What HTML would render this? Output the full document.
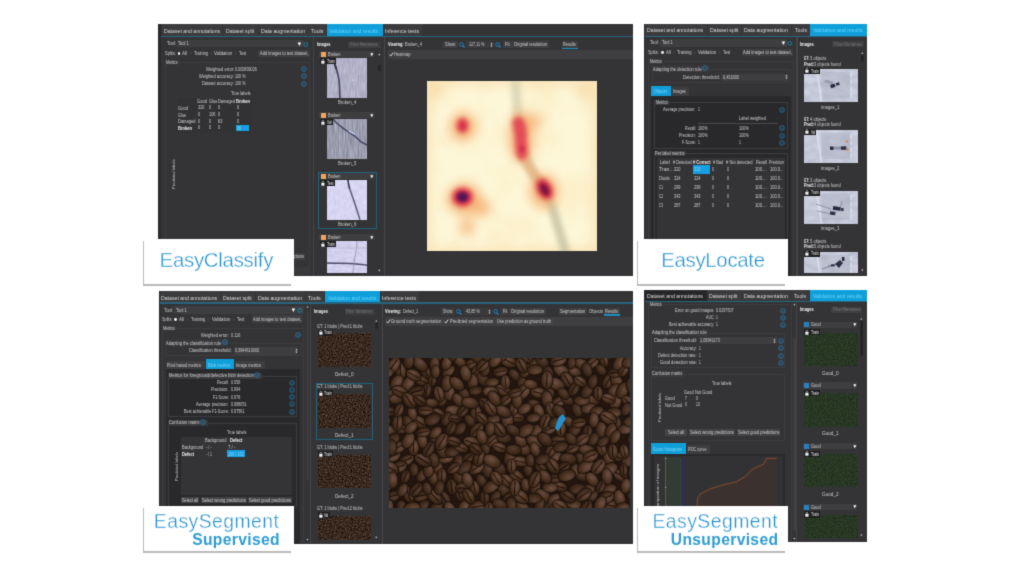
<!DOCTYPE html>
<html><head><meta charset="utf-8"><title>Deep learning tools</title>
<style>
html,body{margin:0;padding:0;}
body{width:1024px;height:576px;background:#fff;position:relative;overflow:hidden;font-family:"Liberation Sans",sans-serif;}
.b{position:absolute;}
.t{position:absolute;white-space:nowrap;line-height:1;transform-origin:0 0;}
svg{position:absolute;overflow:hidden;}
#stage{position:absolute;left:0;top:0;width:1024px;height:576px;background:#fff;filter:url(#soft);}
</style></head><body><svg width="0" height="0" style="position:absolute"><filter id="soft" x="0" y="0" width="100%" height="100%" color-interpolation-filters="sRGB"><feConvolveMatrix order="3" kernelMatrix="0.02 0.10 0.02 0.10 0.52 0.10 0.02 0.10 0.02" edgeMode="duplicate" preserveAlpha="true"/></filter></svg><div id="stage">
<div class="b" style="left:158.20px;top:24.00px;width:475.00px;height:252.40px;background:#343436;"></div>
<div class="b" style="left:158.20px;top:24.00px;width:2.60px;height:252.40px;background:#2a2a2c;"></div>
<div class="b" style="left:161.60px;top:24.00px;width:60.80px;height:12.00px;background:#3b3b3d;"></div>
<div class="t" style="left:163.70px;top:29px;font-size:5.6px;color:#d8d8d8;transform:scaleX(0.926);">Dataset and annotations</div>
<div class="b" style="left:223.40px;top:24.00px;width:34.20px;height:12.00px;background:#3b3b3d;"></div>
<div class="t" style="left:226.10px;top:29px;font-size:5.6px;color:#d8d8d8;transform:scaleX(0.918);">Dataset split</div>
<div class="b" style="left:258.50px;top:24.00px;width:49.20px;height:12.00px;background:#3b3b3d;"></div>
<div class="t" style="left:260.60px;top:29px;font-size:5.6px;color:#d8d8d8;transform:scaleX(0.932);">Data augmentation</div>
<div class="b" style="left:308.60px;top:24.00px;width:17.80px;height:12.00px;background:#3b3b3d;"></div>
<div class="t" style="left:310.60px;top:29px;font-size:5.6px;color:#d8d8d8;transform:scaleX(0.956);">Tools</div>
<div class="b" style="left:326.90px;top:24.00px;width:55.90px;height:12.00px;background:#109fd9;"></div>
<div class="t" style="left:329.40px;top:29px;font-size:5.6px;color:#66d2ff;transform:scaleX(0.926);">Validation and results</div>
<div class="b" style="left:383.60px;top:24.00px;width:38.30px;height:12.00px;background:#3b3b3d;"></div>
<div class="t" style="left:384.80px;top:29px;font-size:5.6px;color:#d8d8d8;transform:scaleX(0.926);">Inference tests</div>
<div class="b" style="left:161.00px;top:36.00px;width:472.20px;height:1.30px;background:#28647f;"></div>
<div class="b" style="left:176.50px;top:39.80px;width:127.00px;height:7.50px;background:#3e3e40;"></div>
<div class="t" style="left:166.70px;top:42px;font-size:4.6px;color:#cccccc;transform:scaleX(0.937);">Tool:</div>
<div class="t" style="left:178.30px;top:42px;font-size:4.6px;color:#cccccc;transform:scaleX(0.888);">Tool 1</div>
<svg style="left:297px;top:41.5px" width="12" height="5" viewBox="0 0 12 5"><path d="M0.6 0.5h3.6L2.4 4z" fill="#fff"/><circle cx="8.8" cy="2.4" r="1.9" fill="none" stroke="#1b8fc4" stroke-width="0.8"/></svg>
<div class="t" style="left:164.80px;top:52px;font-size:4.6px;color:#cccccc;transform:scaleX(0.862);">Splits:</div>
<div class="b" style="left:177.50px;top:51.80px;width:2.8px;height:2.8px;border-radius:50%;background:#f4f4f4"></div>
<div class="t" style="left:182.00px;top:52px;font-size:4.6px;color:#cccccc;transform:scaleX(0.978);">All</div>
<div class="b" style="left:189.20px;top:51.80px;width:2.8px;height:2.8px;border-radius:50%;background:#3d3d3f"></div>
<div class="t" style="left:193.80px;top:52px;font-size:4.6px;color:#cccccc;transform:scaleX(0.851);">Training</div>
<div class="b" style="left:209.80px;top:51.80px;width:2.8px;height:2.8px;border-radius:50%;background:#3d3d3f"></div>
<div class="t" style="left:214.40px;top:52px;font-size:4.6px;color:#cccccc;transform:scaleX(0.911);">Validation</div>
<div class="b" style="left:234.60px;top:51.80px;width:2.8px;height:2.8px;border-radius:50%;background:#3d3d3f"></div>
<div class="t" style="left:239.40px;top:52px;font-size:4.6px;color:#cccccc;transform:scaleX(0.853);">Test</div>
<div class="b" style="left:258.00px;top:49.50px;width:51.60px;height:7.60px;background:#3e3e40;"></div>
<div class="t" style="left:260.00px;top:52px;font-size:4.6px;color:#cccccc;transform:scaleX(0.872);">Add images to test dataset,</div>
<div class="b" style="left:165.00px;top:61.80px;width:145.00px;height:211.80px;border:0.6px solid #3c3c3e;box-sizing:border-box"></div>
<div class="b" style="left:165.00px;top:59.60px;width:13.80px;height:4.60px;background:#3c3c3e;"></div>
<div class="t" style="left:166.20px;top:61px;font-size:4.5px;color:#cccccc;transform:scaleX(0.786);">Metrics</div>
<div class="t" style="left:205.50px;top:68px;font-size:4.6px;color:#cccccc;transform:scaleX(0.892);">Weighted error:</div>
<div class="t" style="left:235.20px;top:68px;font-size:4.6px;color:#cccccc;transform:scaleX(0.812);">0.000899026</div>
<svg style="left:301.40px;top:66.10px" width="6" height="6" viewBox="-3 -3 6 6"><circle r="2.3" fill="none" stroke="#1f95d4" stroke-width="0.62"/><path d="M0 -1v0.4M0 -0.1v1.1" stroke="#1f95d4" stroke-width="0.65"/></svg>
<div class="t" style="left:198.80px;top:75px;font-size:4.6px;color:#cccccc;transform:scaleX(0.866);">Weighted accuracy:</div>
<div class="t" style="left:235.20px;top:75px;font-size:4.6px;color:#cccccc;transform:scaleX(0.797);">100 %</div>
<svg style="left:301.40px;top:73.20px" width="6" height="6" viewBox="-3 -3 6 6"><circle r="2.3" fill="none" stroke="#1f95d4" stroke-width="0.62"/><path d="M0 -1v0.4M0 -0.1v1.1" stroke="#1f95d4" stroke-width="0.65"/></svg>
<div class="t" style="left:201.90px;top:82px;font-size:4.6px;color:#cccccc;transform:scaleX(0.864);">Dataset accuracy:</div>
<div class="t" style="left:235.20px;top:82px;font-size:4.6px;color:#cccccc;transform:scaleX(0.797);">100 %</div>
<svg style="left:301.40px;top:80.50px" width="6" height="6" viewBox="-3 -3 6 6"><circle r="2.3" fill="none" stroke="#1f95d4" stroke-width="0.62"/><path d="M0 -1v0.4M0 -0.1v1.1" stroke="#1f95d4" stroke-width="0.65"/></svg>
<div class="t" style="left:231.20px;top:92px;font-size:4.6px;color:#cccccc;transform:scaleX(0.868);">True labels</div>
<div class="b" style="left:177.00px;top:97.50px;width:75.00px;height:35.00px;background:#323234;"></div>
<div class="t" style="left:197.30px;top:100px;font-size:4.6px;color:#cccccc;transform:scaleX(0.880);">Good</div>
<div class="t" style="left:208.60px;top:100px;font-size:4.6px;color:#cccccc;transform:scaleX(0.864);">Glue</div>
<div class="t" style="left:218.00px;top:100px;font-size:4.6px;color:#cccccc;transform:scaleX(0.852);">Damaged</div>
<div class="t" style="left:236.00px;top:100px;font-size:4.6px;color:#f2f2f2;transform:scaleX(0.883);font-weight:bold;">Broken</div>
<div class="b" style="left:235.60px;top:124.70px;width:13.80px;height:6.40px;background:#169fe2;"></div>
<div class="t" style="left:237.00px;top:127px;font-size:4.6px;color:#8fd0f3;transform:scaleX(0.821);">96</div>
<div class="t" style="left:178.10px;top:107px;font-size:4.6px;color:#cccccc;transform:scaleX(0.880);">Good</div>
<div class="t" style="left:197.70px;top:106px;font-size:4.6px;color:#cccccc;transform:scaleX(0.840);">320</div>
<div class="t" style="left:208.60px;top:106px;font-size:4.6px;color:#cccccc;transform:scaleX(0.840);">0</div>
<div class="t" style="left:218.30px;top:106px;font-size:4.6px;color:#cccccc;transform:scaleX(0.840);">0</div>
<div class="t" style="left:236.70px;top:106px;font-size:4.6px;color:#cccccc;transform:scaleX(0.840);">0</div>
<div class="t" style="left:178.10px;top:114px;font-size:4.6px;color:#cccccc;transform:scaleX(0.844);">Glue</div>
<div class="t" style="left:197.70px;top:113px;font-size:4.6px;color:#cccccc;transform:scaleX(0.840);">0</div>
<div class="t" style="left:208.60px;top:113px;font-size:4.6px;color:#cccccc;transform:scaleX(0.840);">106</div>
<div class="t" style="left:218.30px;top:113px;font-size:4.6px;color:#cccccc;transform:scaleX(0.840);">0</div>
<div class="t" style="left:236.70px;top:113px;font-size:4.6px;color:#cccccc;transform:scaleX(0.840);">0</div>
<div class="t" style="left:178.10px;top:120px;font-size:4.6px;color:#cccccc;transform:scaleX(0.872);">Damaged</div>
<div class="t" style="left:197.70px;top:120px;font-size:4.6px;color:#cccccc;transform:scaleX(0.840);">0</div>
<div class="t" style="left:208.60px;top:120px;font-size:4.6px;color:#cccccc;transform:scaleX(0.840);">0</div>
<div class="t" style="left:218.30px;top:120px;font-size:4.6px;color:#cccccc;transform:scaleX(0.840);">83</div>
<div class="t" style="left:236.70px;top:120px;font-size:4.6px;color:#cccccc;transform:scaleX(0.840);">0</div>
<div class="t" style="left:178.10px;top:127px;font-size:4.6px;color:#f2f2f2;transform:scaleX(0.877);font-weight:bold;">Broken</div>
<div class="t" style="left:197.70px;top:126px;font-size:4.6px;color:#cccccc;transform:scaleX(0.840);">0</div>
<div class="t" style="left:208.60px;top:126px;font-size:4.6px;color:#cccccc;transform:scaleX(0.840);">0</div>
<div class="t" style="left:218.30px;top:126px;font-size:4.6px;color:#cccccc;transform:scaleX(0.840);">0</div>
<div class="t" style="left:171.64px;top:189.00px;font-size:4.1px;color:#c4c4c4;transform:rotate(-90deg) scaleX(1.011);">Predicted labels</div>
<div class="t" style="left:293.60px;top:255px;font-size:4.6px;color:#cccccc;transform:scaleX(0.824);">ctions</div>
<div class="b" style="left:292.00px;top:253.00px;width:12.50px;height:6.50px;background:#3e3e40;"></div>
<div class="t" style="left:293.60px;top:255px;font-size:4.6px;color:#cccccc;transform:scaleX(0.824);">ctions</div>
<div class="b" style="left:292.00px;top:267.20px;width:16.50px;height:4.60px;background:#3a3a3c;"></div>
<div class="b" style="left:313.00px;top:37.30px;width:1.00px;height:239.10px;background:#444446;"></div>
<div class="t" style="left:316.70px;top:43px;font-size:4.6px;color:#f2f2f2;transform:scaleX(0.852);font-weight:bold;">Images</div>
<div class="b" style="left:348.10px;top:41.80px;width:32.90px;height:6.30px;background:#3e3e40;"></div>
<div class="t" style="left:349.80px;top:43px;font-size:4.5px;color:#777779;transform:scaleX(0.898);">Filter filenames</div>
<svg style="left:376.5px;top:51px" width="5" height="225" viewBox="0 0 5 225"><path d="M1.3 4.2h2L2.3 2.6z" fill="#ddd"/><rect x="1.2" y="14" width="2.4" height="5.6" fill="#222224"/><path d="M1.3 218.8h2L2.3 220.4z" fill="#ddd"/></svg>
<div class="b" style="left:319.40px;top:51.20px;width:49.40px;height:6.20px;background:#3e3e40;"></div>
<div class="b" style="left:320.60px;top:52.10px;width:5.20px;height:4.80px;background:#f2a45c;"></div>
<div class="t" style="left:327.80px;top:53px;font-size:4.5px;color:#cccccc;transform:scaleX(0.877);">Broken</div>
<div class="b" style="left:369.20px;top:51.20px;width:5.20px;height:6.20px;background:#3e3e40;"></div>
<svg style="left:370.2px;top:52.80px" width="4" height="4" viewBox="0 0 4 4"><path d="M0.2 0.2h3.2L1.8 3.2z" fill="#fff"/></svg>
<svg style="left:327.30px;top:58.20px" width="40.20" height="39.80" viewBox="0 0 40.20 39.80"><filter id="n1" x="0" y="0" width="100%" height="100%" color-interpolation-filters="sRGB"><feTurbulence type="fractalNoise" baseFrequency="0.7 0.12" numOctaves="2" seed="3"/><feColorMatrix values="0.17 0 0 0 0.613  0.17 0 0 0 0.609  0.17 0 0 0 0.699  0 0 0 0 1"/></filter><rect width="100%" height="100%" filter="url(#n1)"/><path d="M6.7 0C6.6 4 8 7 9 10S11.5 18 12 22S12.6 34 13 40" fill="none" stroke="#3a3c58" stroke-width="1.7" opacity="0.92"/><path d="M7 2C7 5 8.4 8 9.4 11" fill="none" stroke="#2a2c48" stroke-width="1.6"/><circle cx="26" cy="22" r="0.8" fill="#e4e4f6"/></svg>
<div class="b" style="left:320.30px;top:58.20px;width:15.90px;height:6.20px;background:#1f1f21;"></div>
<svg style="left:321.20px;top:58.90px" width="4" height="5" viewBox="0 0 4 5"><rect x="0.3" y="2" width="3.2" height="2.7" fill="#f2f2f2"/><path d="M1 2.2V1.4a0.9 0.9 0 0 1 1.8 0V2.2" fill="none" stroke="#f2f2f2" stroke-width="0.6"/></svg>
<div class="t" style="left:326.90px;top:60px;font-size:4.5px;color:#e4e4e4;transform:scaleX(0.803);">Train</div>
<div class="t" style="left:338.20px;top:101px;font-size:4.5px;color:#cccccc;transform:scaleX(0.955);">Broken_4</div>
<div class="b" style="left:319.40px;top:112.20px;width:49.40px;height:6.20px;background:#3e3e40;"></div>
<div class="b" style="left:320.60px;top:113.10px;width:5.20px;height:4.80px;background:#f2a45c;"></div>
<div class="t" style="left:327.80px;top:114px;font-size:4.5px;color:#cccccc;transform:scaleX(0.877);">Broken</div>
<div class="b" style="left:369.20px;top:112.20px;width:5.20px;height:6.20px;background:#3e3e40;"></div>
<svg style="left:370.2px;top:113.80px" width="4" height="4" viewBox="0 0 4 4"><path d="M0.2 0.2h3.2L1.8 3.2z" fill="#fff"/></svg>
<svg style="left:327.30px;top:119.20px" width="40.20" height="39.80" viewBox="0 0 40.20 39.80"><filter id="n2" x="0" y="0" width="100%" height="100%" color-interpolation-filters="sRGB"><feTurbulence type="fractalNoise" baseFrequency="0.8 0.07" numOctaves="2" seed="7"/><feColorMatrix values="0.3 0 0 0 0.462  0.3 0 0 0 0.462  0.3 0 0 0 0.536  0 0 0 0 1"/></filter><rect width="100%" height="100%" filter="url(#n2)"/><path d="M6 0C10 5 14 8 20 12S30 18 34 23L40.2 26" fill="none" stroke="#3a3c58" stroke-width="1.5" opacity="0.9"/><path d="M22 12l5 3" stroke="#c8d4ff" stroke-width="1.2"/></svg>
<div class="b" style="left:320.30px;top:119.20px;width:12.40px;height:6.20px;background:#1f1f21;"></div>
<svg style="left:321.20px;top:119.90px" width="4" height="5" viewBox="0 0 4 5"><rect x="0.3" y="2" width="3.2" height="2.7" fill="#f2f2f2"/><path d="M1 2.2V1.4a0.9 0.9 0 0 1 1.8 0V2.2" fill="none" stroke="#f2f2f2" stroke-width="0.6"/></svg>
<div class="t" style="left:326.90px;top:121px;font-size:4.5px;color:#e4e4e4;transform:scaleX(0.746);">Val</div>
<div class="t" style="left:338.20px;top:162px;font-size:4.5px;color:#cccccc;transform:scaleX(0.955);">Broken_5</div>
<div class="b" style="left:318px;top:172.30px;width:58.6px;height:56.6px;border:0.8px solid #20627c;box-sizing:border-box"></div>
<div class="b" style="left:319.40px;top:173.20px;width:49.40px;height:6.20px;background:#3e3e40;"></div>
<div class="b" style="left:320.60px;top:174.10px;width:5.20px;height:4.80px;background:#f2a45c;"></div>
<div class="t" style="left:327.80px;top:175px;font-size:4.5px;color:#cccccc;transform:scaleX(0.877);">Broken</div>
<div class="b" style="left:369.20px;top:173.20px;width:5.20px;height:6.20px;background:#3e3e40;"></div>
<svg style="left:370.2px;top:174.80px" width="4" height="4" viewBox="0 0 4 4"><path d="M0.2 0.2h3.2L1.8 3.2z" fill="#fff"/></svg>
<svg style="left:327.30px;top:180.20px" width="40.20" height="39.80" viewBox="0 0 40.20 39.80"><filter id="n3" x="0" y="0" width="100%" height="100%" color-interpolation-filters="sRGB"><feTurbulence type="fractalNoise" baseFrequency="0.3 0.2" numOctaves="2" seed="11"/><feColorMatrix values="0.1 0 0 0 0.797  0.1 0 0 0 0.785  0.1 0 0 0 0.899  0 0 0 0 1"/></filter><rect width="100%" height="100%" filter="url(#n3)"/><path d="M21 0C21 6 24 12 26 18S30 30 33 39.8" fill="none" stroke="#4a4c64" stroke-width="1.5" opacity="0.9"/><path d="M21 0l1.5 9" stroke="#35374f" stroke-width="1.2"/></svg>
<div class="b" style="left:320.30px;top:180.20px;width:14.40px;height:6.20px;background:#1f1f21;"></div>
<svg style="left:321.20px;top:180.90px" width="4" height="5" viewBox="0 0 4 5"><rect x="0.3" y="2" width="3.2" height="2.7" fill="#f2f2f2"/><path d="M1 2.2V1.4a0.9 0.9 0 0 1 1.8 0V2.2" fill="none" stroke="#f2f2f2" stroke-width="0.6"/></svg>
<div class="t" style="left:326.90px;top:182px;font-size:4.5px;color:#e4e4e4;transform:scaleX(0.800);">Test</div>
<div class="t" style="left:338.20px;top:223px;font-size:4.5px;color:#cccccc;transform:scaleX(0.955);">Broken_6</div>
<div class="b" style="left:319.40px;top:234.20px;width:49.40px;height:6.20px;background:#3e3e40;"></div>
<div class="b" style="left:320.60px;top:235.10px;width:5.20px;height:4.80px;background:#f2a45c;"></div>
<div class="t" style="left:327.80px;top:236px;font-size:4.5px;color:#cccccc;transform:scaleX(0.877);">Broken</div>
<div class="b" style="left:369.20px;top:234.20px;width:5.20px;height:6.20px;background:#3e3e40;"></div>
<svg style="left:370.2px;top:235.80px" width="4" height="4" viewBox="0 0 4 4"><path d="M0.2 0.2h3.2L1.8 3.2z" fill="#fff"/></svg>
<svg style="left:327.30px;top:241.20px" width="40.20" height="31.70" viewBox="0 0 40.20 31.70"><filter id="n4" x="0" y="0" width="100%" height="100%" color-interpolation-filters="sRGB"><feTurbulence type="fractalNoise" baseFrequency="0.2 0.3" numOctaves="2" seed="5"/><feColorMatrix values="0.12 0 0 0 0.767  0.12 0 0 0 0.756  0.12 0 0 0 0.869  0 0 0 0 1"/></filter><rect width="100%" height="100%" filter="url(#n4)"/><path d="M0 22C10 22.5 20 22 30 23S36 24 40.2 24" fill="none" stroke="#3a3c58" stroke-width="1.4" opacity="0.9"/><path d="M30 0C30 8 28 14 27 22S26 30 26 35.2" fill="none" stroke="#8a8aa6" stroke-width="0.7"/><path d="M0 7h40" stroke="#aaa9c4" stroke-width="0.6"/></svg>
<div class="b" style="left:320.30px;top:241.20px;width:15.90px;height:6.20px;background:#1f1f21;"></div>
<svg style="left:321.20px;top:241.90px" width="4" height="5" viewBox="0 0 4 5"><rect x="0.3" y="2" width="3.2" height="2.7" fill="#f2f2f2"/><path d="M1 2.2V1.4a0.9 0.9 0 0 1 1.8 0V2.2" fill="none" stroke="#f2f2f2" stroke-width="0.6"/></svg>
<div class="t" style="left:326.90px;top:243px;font-size:4.5px;color:#e4e4e4;transform:scaleX(0.803);">Train</div>
<div class="b" style="left:383.00px;top:37.30px;width:2.00px;height:239.10px;background:#343436;"></div>
<div class="b" style="left:384.20px;top:37.30px;width:0.60px;height:239.10px;background:#47474a;"></div>
<div class="t" style="left:387.80px;top:43px;font-size:4.6px;color:#f2f2f2;transform:scaleX(0.828);font-weight:bold;">Viewing:</div>
<div class="t" style="left:405.00px;top:43px;font-size:4.5px;color:#cccccc;transform:scaleX(0.877);">Broken_4</div>
<div class="b" style="left:443.00px;top:41.20px;width:15.00px;height:7.20px;background:#3e3e40;"></div>
<div class="t" style="left:444.80px;top:43px;font-size:4.6px;color:#cccccc;transform:scaleX(0.860);">Show:</div>
<svg style="left:459.00px;top:41.60px" width="6" height="6" viewBox="-3 -3 6 6"><circle cx="-0.5" cy="-0.5" r="1.8" fill="none" stroke="#1b8fd0" stroke-width="0.9"/><path d="M0.8 0.8L2.6 2.6" stroke="#1b8fd0" stroke-width="1.1"/></svg>
<div class="b" style="left:466.00px;top:41.20px;width:28.00px;height:7.20px;background:#3a3a3c;"></div>
<div class="t" style="left:468.60px;top:43px;font-size:4.5px;color:#cccccc;transform:scaleX(0.824);">127,11 %</div>
<svg style="left:490px;top:42px" width="3" height="6" viewBox="0 0 3 6"><path d="M0.5 2.2h2L1.5 0.8zM0.5 3.6h2L1.5 5z" fill="#eee"/></svg>
<svg style="left:495.30px;top:41.60px" width="6" height="6" viewBox="-3 -3 6 6"><circle cx="-0.5" cy="-0.5" r="1.8" fill="none" stroke="#1b8fd0" stroke-width="0.9"/><path d="M0.8 0.8L2.6 2.6" stroke="#1b8fd0" stroke-width="1.1"/></svg>
<div class="b" style="left:502.60px;top:41.20px;width:9.00px;height:7.20px;background:#3e3e40;"></div>
<div class="t" style="left:505.00px;top:43px;font-size:4.6px;color:#cccccc;transform:scaleX(0.920);">Fit</div>
<div class="b" style="left:512.00px;top:41.20px;width:37.00px;height:7.20px;background:#3e3e40;"></div>
<div class="t" style="left:513.80px;top:43px;font-size:4.6px;color:#cccccc;transform:scaleX(0.890);">Original resolution</div>
<div class="b" style="left:561.50px;top:41.20px;width:16.50px;height:7.20px;background:#3e3e40;"></div>
<div class="t" style="left:563.20px;top:43px;font-size:4.6px;color:#cccccc;transform:scaleX(0.834);text-decoration:none">Results</div>
<div class="b" style="left:562.00px;top:48.20px;width:15.50px;height:1.20px;background:#1b8fc4;"></div>
<div class="b" style="left:388.00px;top:50.00px;width:245.20px;height:9.00px;background:#3f3f41;"></div>
<svg style="left:389px;top:52px" width="5" height="5" viewBox="0 0 5 5"><path d="M0.6 2.6L1.8 4L4.2 0.6" fill="none" stroke="#fff" stroke-width="0.8"/></svg>
<div class="t" style="left:394.40px;top:53px;font-size:4.5px;color:#cccccc;transform:scaleX(0.898);">Heatmap</div>
<svg style="left:426.9px;top:80.8px" width="170.6" height="170.4" viewBox="0 0 170.6 170.4">
<defs>
<filter id="hb1" x="-50%" y="-50%" width="200%" height="200%"><feGaussianBlur stdDeviation="2.6"/></filter>
<filter id="hb2" x="-50%" y="-50%" width="200%" height="200%"><feGaussianBlur stdDeviation="6"/></filter>
<filter id="hb3" x="-50%" y="-50%" width="200%" height="200%"><feGaussianBlur stdDeviation="1.7"/></filter>
<filter id="hb4" x="-50%" y="-50%" width="200%" height="200%"><feGaussianBlur stdDeviation="2.4"/></filter>
<filter id="hn" x="0" y="0" width="100%" height="100%" color-interpolation-filters="sRGB"><feTurbulence type="fractalNoise" baseFrequency="0.03" numOctaves="3" seed="4"/><feColorMatrix values="0 0 0 0 0.97  0 0 0 0 0.84  0 0 0 0 0.60  1.8 0 0 0 -0.72"/></filter>
</defs>
<rect width="170.6" height="170.4" fill="#fdf7d8"/>
<rect width="170.6" height="170.4" filter="url(#hn)" opacity="0.27"/>
<g filter="url(#hb2)" opacity="0.5" fill="#f5cf98"><rect x="-6" y="-6" width="182" height="11"/><rect x="-6" y="-6" width="10" height="182"/><rect x="166" y="-6" width="12" height="182"/><rect x="-6" y="167" width="182" height="10"/><circle cx="160" cy="6" r="13"/><circle cx="8" cy="8" r="10"/></g>
<g filter="url(#hb4)" opacity="0.8"><path d="M88 -4C90.5 20 90 50 97 74" fill="none" stroke="#d9d3b2" stroke-width="10"/><path d="M97 74C103 92 121 110 127 132S136 160 139.5 176" fill="none" stroke="#c6c1a2" stroke-width="9.5"/></g>
<path d="M95 70C100 86 108 96 116 104" fill="none" stroke="#f1ae78" stroke-width="9" filter="url(#hb4)" opacity="0.6"/>
<g filter="url(#hb2)" fill="#f4a868" opacity="0.85">
<ellipse cx="36" cy="46" rx="13" ry="14"/><ellipse cx="37" cy="118" rx="17" ry="15"/><ellipse cx="54" cy="127" rx="10" ry="8"/>
<ellipse cx="94" cy="56" rx="12" ry="26"/><ellipse cx="107" cy="40" rx="8" ry="6"/><ellipse cx="117" cy="110" rx="14" ry="17"/><ellipse cx="40" cy="146" rx="7" ry="8"/>
</g>
<g filter="url(#hb1)">
<ellipse cx="35.5" cy="44.5" rx="6" ry="7.6" fill="#dd3c4c"/>
<ellipse cx="35.5" cy="116" rx="10.5" ry="9.5" fill="#dc3448"/>
<path d="M90 39C95 37 97 48 96.5 57S99.5 71 96 75S91 66 91.5 58S86.5 43 90 39z" fill="#e24c55" stroke="#e24c55" stroke-width="6.5"/>
<ellipse cx="117.5" cy="108" rx="7.5" ry="11" transform="rotate(-28 117.5 108)" fill="#d42f46"/>
</g>
<g filter="url(#hb3)">
<ellipse cx="35.5" cy="45" rx="2" ry="3" fill="#d43350"/>
<ellipse cx="35.5" cy="116" rx="6.2" ry="5.4" fill="#6a1556"/>
<ellipse cx="36" cy="116" rx="3" ry="2.6" fill="#4a1858"/>
<ellipse cx="117.5" cy="108.5" rx="3.6" ry="6.5" transform="rotate(-28 117.5 108.5)" fill="#7c1240"/>
<ellipse cx="95" cy="68" rx="2" ry="3.4" fill="#cc2c48"/>
</g>
</svg>
<div class="b" style="left:643.50px;top:24.00px;width:223.40px;height:252.40px;background:#343436;"></div>
<div class="b" style="left:643.50px;top:24.00px;width:1.60px;height:252.40px;background:#2a2a2c;"></div>
<div class="b" style="left:644.80px;top:24.00px;width:62.40px;height:11.60px;background:#3b3b3d;"></div>
<div class="t" style="left:647.00px;top:28px;font-size:5.6px;color:#d8d8d8;transform:scaleX(0.927);">Dataset and annotations</div>
<div class="b" style="left:708.20px;top:24.00px;width:33.20px;height:11.60px;background:#3b3b3d;"></div>
<div class="t" style="left:709.50px;top:28px;font-size:5.6px;color:#d8d8d8;transform:scaleX(0.928);">Dataset split</div>
<div class="b" style="left:742.40px;top:24.00px;width:48.60px;height:11.60px;background:#3b3b3d;"></div>
<div class="t" style="left:743.90px;top:28px;font-size:5.6px;color:#d8d8d8;transform:scaleX(0.926);">Data augmentation</div>
<div class="b" style="left:792.00px;top:24.00px;width:17.60px;height:11.60px;background:#3b3b3d;"></div>
<div class="t" style="left:794.50px;top:28px;font-size:5.6px;color:#d8d8d8;transform:scaleX(0.918);">Tools</div>
<div class="b" style="left:810.40px;top:24.00px;width:56.50px;height:11.60px;background:#109fd9;"></div>
<div class="t" style="left:812.80px;top:28px;font-size:5.6px;color:#66d2ff;transform:scaleX(0.934);">Validation and results</div>
<div class="b" style="left:644.80px;top:35.50px;width:222.10px;height:1.20px;background:#28647f;"></div>
<div class="b" style="left:660.00px;top:39.00px;width:127.00px;height:7.50px;background:#3e3e40;"></div>
<div class="t" style="left:650.20px;top:41px;font-size:4.6px;color:#cccccc;transform:scaleX(0.906);">Tool:</div>
<div class="t" style="left:661.60px;top:41px;font-size:4.6px;color:#cccccc;transform:scaleX(0.888);">Tool 1</div>
<svg style="left:780.8px;top:40.7px" width="12" height="5" viewBox="0 0 12 5"><path d="M0.6 0.5h3.6L2.4 4z" fill="#fff"/><circle cx="8.8" cy="2.4" r="1.9" fill="none" stroke="#1b8fc4" stroke-width="0.8"/></svg>
<div class="t" style="left:648.30px;top:51px;font-size:4.6px;color:#cccccc;transform:scaleX(0.854);">Splits:</div>
<div class="b" style="left:660.90px;top:51.00px;width:2.8px;height:2.8px;border-radius:50%;background:#f4f4f4"></div>
<div class="t" style="left:665.50px;top:51px;font-size:4.6px;color:#cccccc;transform:scaleX(0.919);">All</div>
<div class="b" style="left:672.40px;top:51.00px;width:2.8px;height:2.8px;border-radius:50%;background:#3d3d3f"></div>
<div class="t" style="left:677.00px;top:51px;font-size:4.6px;color:#cccccc;transform:scaleX(0.875);">Training</div>
<div class="b" style="left:693.20px;top:51.00px;width:2.8px;height:2.8px;border-radius:50%;background:#3d3d3f"></div>
<div class="t" style="left:697.80px;top:51px;font-size:4.6px;color:#cccccc;transform:scaleX(0.916);">Validation</div>
<div class="b" style="left:718.20px;top:51.00px;width:2.8px;height:2.8px;border-radius:50%;background:#3d3d3f"></div>
<div class="t" style="left:722.80px;top:51px;font-size:4.6px;color:#cccccc;transform:scaleX(0.853);">Test</div>
<div class="b" style="left:741.50px;top:48.80px;width:51.80px;height:7.60px;background:#3e3e40;"></div>
<div class="t" style="left:743.40px;top:51px;font-size:4.6px;color:#cccccc;transform:scaleX(0.877);">Add images to test dataset,</div>
<div class="b" style="left:648.40px;top:61.20px;width:145.60px;height:212.80px;border:0.6px solid #3c3c3e;box-sizing:border-box"></div>
<div class="b" style="left:648.40px;top:59.00px;width:14.00px;height:4.60px;background:#3c3c3e;"></div>
<div class="t" style="left:649.60px;top:60px;font-size:4.5px;color:#cccccc;transform:scaleX(0.800);">Metrics</div>
<div class="b" style="left:651.5px;top:69px;width:139px;height:14px;border:0.6px solid #3c3c3e;box-sizing:border-box"></div>
<div class="b" style="left:651.60px;top:66.30px;width:58.00px;height:6.00px;background:#3a3a3c;"></div>
<div class="t" style="left:652.60px;top:68px;font-size:4.6px;color:#cccccc;transform:scaleX(0.893);">Adapting the detection rule</div>
<svg style="left:701.80px;top:65.40px" width="6" height="6" viewBox="-3 -3 6 6"><circle r="2.3" fill="none" stroke="#1f95d4" stroke-width="0.62"/><path d="M0 -1v0.4M0 -0.1v1.1" stroke="#1f95d4" stroke-width="0.65"/></svg>
<div class="t" style="left:683.00px;top:76px;font-size:4.6px;color:#cccccc;transform:scaleX(0.904);">Detection threshold:</div>
<div class="b" style="left:721.20px;top:73.80px;width:66.40px;height:7.00px;background:#3e3e40;"></div>
<div class="t" style="left:722.80px;top:76px;font-size:4.5px;color:#cccccc;transform:scaleX(0.852);">0,431800</div>
<svg style="left:784.6px;top:74.4px" width="3" height="6" viewBox="0 0 3 6"><path d="M0.5 2.2h2L1.5 0.8zM0.5 3.6h2L1.5 5z" fill="#eee"/></svg>
<div class="b" style="left:651.20px;top:85.50px;width:19.60px;height:10.60px;background:#109fd9;"></div>
<div class="t" style="left:653.80px;top:90px;font-size:4.6px;color:#7fd0f7;transform:scaleX(0.840);">Objects</div>
<div class="b" style="left:671.40px;top:87.00px;width:17.80px;height:9.00px;background:#3e3e40;"></div>
<div class="t" style="left:672.80px;top:90px;font-size:4.6px;color:#cccccc;transform:scaleX(0.849);">Images</div>
<div class="b" style="left:651.20px;top:96.00px;width:139.60px;height:180.40px;background:#29292b;"></div>
<div class="b" style="left:654.4px;top:102.2px;width:133.4px;height:46.4px;border:0.6px solid #3c3c3e;box-sizing:border-box"></div>
<div class="b" style="left:654.40px;top:99.70px;width:14.20px;height:5.10px;background:#3c3c3e;"></div>
<div class="t" style="left:655.60px;top:101px;font-size:4.5px;color:#cccccc;transform:scaleX(0.814);">Metrics</div>
<div class="t" style="left:663.40px;top:108px;font-size:4.6px;color:#cccccc;transform:scaleX(0.852);">Average precision:</div>
<div class="t" style="left:698.10px;top:108px;font-size:4.6px;color:#cccccc;transform:scaleX(0.743);">1</div>
<svg style="left:779.20px;top:106.50px" width="6" height="6" viewBox="-3 -3 6 6"><circle r="2.3" fill="none" stroke="#1f95d4" stroke-width="0.62"/><path d="M0 -1v0.4M0 -0.1v1.1" stroke="#1f95d4" stroke-width="0.65"/></svg>
<div class="t" style="left:738.90px;top:117px;font-size:4.6px;color:#cccccc;transform:scaleX(0.869);">Label weighted</div>
<div class="b" style="left:698.10px;top:122.80px;width:79.70px;height:0.70px;background:#4a4a4d;"></div>
<div class="t" style="left:684.50px;top:127px;font-size:4.6px;color:#cccccc;transform:scaleX(0.804);">Recall:</div>
<div class="t" style="left:698.10px;top:127px;font-size:4.6px;color:#cccccc;transform:scaleX(0.824);">100%</div>
<div class="t" style="left:738.90px;top:127px;font-size:4.6px;color:#cccccc;transform:scaleX(0.833);">100%</div>
<svg style="left:779.20px;top:125.30px" width="6" height="6" viewBox="-3 -3 6 6"><circle r="2.3" fill="none" stroke="#1f95d4" stroke-width="0.62"/><path d="M0 -1v0.4M0 -0.1v1.1" stroke="#1f95d4" stroke-width="0.65"/></svg>
<div class="t" style="left:679.00px;top:134px;font-size:4.6px;color:#cccccc;transform:scaleX(0.832);">Precision:</div>
<div class="t" style="left:698.10px;top:134px;font-size:4.6px;color:#cccccc;transform:scaleX(0.824);">100%</div>
<div class="t" style="left:738.90px;top:134px;font-size:4.6px;color:#cccccc;transform:scaleX(0.833);">100%</div>
<svg style="left:779.20px;top:132.50px" width="6" height="6" viewBox="-3 -3 6 6"><circle r="2.3" fill="none" stroke="#1f95d4" stroke-width="0.62"/><path d="M0 -1v0.4M0 -0.1v1.1" stroke="#1f95d4" stroke-width="0.65"/></svg>
<div class="t" style="left:681.90px;top:141px;font-size:4.6px;color:#cccccc;transform:scaleX(0.788);">F-Score:</div>
<div class="t" style="left:698.10px;top:141px;font-size:4.6px;color:#cccccc;transform:scaleX(0.743);">1</div>
<div class="t" style="left:739.40px;top:141px;font-size:4.6px;color:#cccccc;transform:scaleX(0.743);">1</div>
<svg style="left:779.20px;top:139.70px" width="6" height="6" viewBox="-3 -3 6 6"><circle r="2.3" fill="none" stroke="#1f95d4" stroke-width="0.62"/><path d="M0 -1v0.4M0 -0.1v1.1" stroke="#1f95d4" stroke-width="0.65"/></svg>
<div class="b" style="left:654.4px;top:153.4px;width:133.4px;height:124px;border:0.6px solid #3c3c3e;box-sizing:border-box"></div>
<div class="b" style="left:654.40px;top:150.60px;width:31.60px;height:5.80px;background:#3c3c3e;"></div>
<div class="t" style="left:655.40px;top:152px;font-size:4.6px;color:#cccccc;transform:scaleX(0.864);">Per label metrics</div>
<div class="b" style="left:657.20px;top:158.00px;width:127.40px;height:118.40px;background:#343436;"></div>
<div class="t" style="left:660.30px;top:161px;font-size:4.5px;color:#cccccc;transform:scaleX(0.881);">Label</div>
<div class="t" style="left:673.30px;top:161px;font-size:4.5px;color:#cccccc;transform:scaleX(0.859);"># Detected</div>
<div class="t" style="left:692.80px;top:161px;font-size:4.5px;color:#f4f4f4;transform:scaleX(0.886);font-weight:bold;"># Correct</div>
<div class="t" style="left:713.00px;top:161px;font-size:4.5px;color:#cccccc;transform:scaleX(0.850);"># Bad</div>
<div class="t" style="left:726.40px;top:161px;font-size:4.5px;color:#cccccc;transform:scaleX(0.902);"># Not detected</div>
<div class="t" style="left:755.60px;top:161px;font-size:4.5px;color:#cccccc;transform:scaleX(0.848);">Recall</div>
<div class="t" style="left:769.00px;top:161px;font-size:4.5px;color:#cccccc;transform:scaleX(0.810);">Precision</div>
<div class="b" style="left:692.80px;top:164.70px;width:17.20px;height:8.90px;background:#169fe2;"></div>
<div class="t" style="left:658.80px;top:168px;font-size:4.5px;color:#cccccc;transform:scaleX(1.157);">Tran...</div>
<div class="t" style="left:673.90px;top:168px;font-size:4.5px;color:#cccccc;transform:scaleX(0.866);">320</div>
<div class="t" style="left:694.20px;top:168px;font-size:4.5px;color:#8fd0f3;transform:scaleX(0.866);">320</div>
<div class="t" style="left:711.90px;top:168px;font-size:4.5px;color:#cccccc;transform:scaleX(0.799);">0</div>
<div class="t" style="left:726.70px;top:168px;font-size:4.5px;color:#cccccc;transform:scaleX(0.799);">0</div>
<div class="t" style="left:754.80px;top:168px;font-size:4.5px;color:#cccccc;transform:scaleX(0.935);">100....</div>
<div class="t" style="left:769.70px;top:168px;font-size:4.5px;color:#cccccc;transform:scaleX(0.886);">100.0...</div>
<div class="t" style="left:658.80px;top:177px;font-size:4.5px;color:#cccccc;transform:scaleX(0.914);">Diode</div>
<div class="t" style="left:673.90px;top:177px;font-size:4.5px;color:#cccccc;transform:scaleX(0.866);">324</div>
<div class="t" style="left:694.20px;top:177px;font-size:4.5px;color:#cccccc;transform:scaleX(0.866);">324</div>
<div class="t" style="left:711.90px;top:177px;font-size:4.5px;color:#cccccc;transform:scaleX(0.799);">0</div>
<div class="t" style="left:726.70px;top:177px;font-size:4.5px;color:#cccccc;transform:scaleX(0.799);">0</div>
<div class="t" style="left:754.80px;top:177px;font-size:4.5px;color:#cccccc;transform:scaleX(0.935);">100....</div>
<div class="t" style="left:769.70px;top:177px;font-size:4.5px;color:#cccccc;transform:scaleX(0.886);">100.0...</div>
<div class="t" style="left:658.80px;top:186px;font-size:4.5px;color:#cccccc;transform:scaleX(0.713);">C1</div>
<div class="t" style="left:673.90px;top:186px;font-size:4.5px;color:#cccccc;transform:scaleX(0.866);">299</div>
<div class="t" style="left:694.20px;top:186px;font-size:4.5px;color:#cccccc;transform:scaleX(0.866);">299</div>
<div class="t" style="left:711.90px;top:186px;font-size:4.5px;color:#cccccc;transform:scaleX(0.799);">0</div>
<div class="t" style="left:726.70px;top:186px;font-size:4.5px;color:#cccccc;transform:scaleX(0.799);">0</div>
<div class="t" style="left:754.80px;top:186px;font-size:4.5px;color:#cccccc;transform:scaleX(0.935);">100....</div>
<div class="t" style="left:769.70px;top:186px;font-size:4.5px;color:#cccccc;transform:scaleX(0.886);">100.0...</div>
<div class="t" style="left:658.80px;top:195px;font-size:4.5px;color:#cccccc;transform:scaleX(0.713);">C2</div>
<div class="t" style="left:673.90px;top:195px;font-size:4.5px;color:#cccccc;transform:scaleX(0.866);">343</div>
<div class="t" style="left:694.20px;top:195px;font-size:4.5px;color:#cccccc;transform:scaleX(0.866);">343</div>
<div class="t" style="left:711.90px;top:195px;font-size:4.5px;color:#cccccc;transform:scaleX(0.799);">0</div>
<div class="t" style="left:726.70px;top:195px;font-size:4.5px;color:#cccccc;transform:scaleX(0.799);">0</div>
<div class="t" style="left:754.80px;top:195px;font-size:4.5px;color:#cccccc;transform:scaleX(0.935);">100....</div>
<div class="t" style="left:769.70px;top:195px;font-size:4.5px;color:#cccccc;transform:scaleX(0.886);">100.0...</div>
<div class="t" style="left:658.80px;top:204px;font-size:4.5px;color:#cccccc;transform:scaleX(0.713);">C3</div>
<div class="t" style="left:673.90px;top:204px;font-size:4.5px;color:#cccccc;transform:scaleX(0.866);">287</div>
<div class="t" style="left:694.20px;top:204px;font-size:4.5px;color:#cccccc;transform:scaleX(0.866);">287</div>
<div class="t" style="left:711.90px;top:204px;font-size:4.5px;color:#cccccc;transform:scaleX(0.799);">0</div>
<div class="t" style="left:726.70px;top:204px;font-size:4.5px;color:#cccccc;transform:scaleX(0.799);">0</div>
<div class="t" style="left:754.80px;top:204px;font-size:4.5px;color:#cccccc;transform:scaleX(0.935);">100....</div>
<div class="t" style="left:769.70px;top:204px;font-size:4.5px;color:#cccccc;transform:scaleX(0.886);">100.0...</div>
<div class="b" style="left:796.30px;top:36.70px;width:1.30px;height:239.70px;background:#444446;"></div>
<div class="t" style="left:800.00px;top:43px;font-size:4.6px;color:#f2f2f2;transform:scaleX(0.870);font-weight:bold;">Images</div>
<div class="b" style="left:832.00px;top:40.90px;width:31.90px;height:6.50px;background:#3e3e40;"></div>
<div class="t" style="left:833.60px;top:43px;font-size:4.5px;color:#777779;transform:scaleX(0.918);">Filter filenames</div>
<svg style="left:860px;top:50px" width="5" height="226" viewBox="0 0 5 226"><path d="M1.3 3.8h2L2.3 2.2z" fill="#ddd"/><rect x="1.2" y="5.6" width="2.3" height="6" fill="#222224"/><path d="M1.3 219.6h2L2.3 221.2z" fill="#ddd"/></svg>
<div class="t" style="left:804.00px;top:57px;font-size:4.5px;color:#f2f2f2;transform:scaleX(0.690);font-weight:bold;">GT:</div>
<div class="t" style="left:809.80px;top:57px;font-size:4.5px;color:#cccccc;transform:scaleX(0.911);">3 objects</div>
<div class="t" style="left:804.00px;top:63px;font-size:4.5px;color:#f2f2f2;transform:scaleX(0.869);font-weight:bold;">Pred:</div>
<div class="t" style="left:814.20px;top:63px;font-size:4.5px;color:#cccccc;transform:scaleX(0.871);">3 objects found</div>
<svg style="left:804.00px;top:68.90px" width="53.90" height="33.00" viewBox="0 0 53.90 33.00"><filter id="n5" x="0" y="0" width="100%" height="100%" color-interpolation-filters="sRGB"><feTurbulence type="fractalNoise" baseFrequency="0.08 0.15" numOctaves="2" seed="2"/><feColorMatrix values="0.14 0 0 0 0.703  0.14 0 0 0 0.718  0.14 0 0 0 0.781  0 0 0 0 1"/></filter><rect width="100%" height="100%" filter="url(#n5)"/><path d="M16.5 2.5H46.5V29H19z" fill="#a9adbd" opacity="0.42"/><path d="M12.5 0L17.5 33" stroke="#e3e7f4" stroke-width="1.6" opacity="0.75"/><path d="M47 4V30" stroke="#e6eaf6" stroke-width="1.2" stroke-dasharray="5 1.5" opacity="0.75"/><path d="M20 13l8 3 1.5-3.5-8-2z" fill="#9aa0b0"/><rect x="26.5" y="15.5" width="4.6" height="3.4" fill="#23283c" transform="rotate(-18 28 17)"/><rect x="32" y="14" width="3.4" height="2.6" fill="#23283c" transform="rotate(-18 33 15)"/></svg>
<div class="b" style="left:804.30px;top:67.70px;width:15.60px;height:6.20px;background:#1f1f21;"></div>
<svg style="left:805.20px;top:68.40px" width="4" height="5" viewBox="0 0 4 5"><rect x="0.3" y="2" width="3.2" height="2.7" fill="#f2f2f2"/><path d="M1 2.2V1.4a0.9 0.9 0 0 1 1.8 0V2.2" fill="none" stroke="#f2f2f2" stroke-width="0.6"/></svg>
<div class="t" style="left:810.90px;top:70px;font-size:4.5px;color:#e4e4e4;transform:scaleX(0.773);">Train</div>
<div class="t" style="left:821.40px;top:106px;font-size:4.5px;color:#cccccc;transform:scaleX(0.943);">images_1</div>
<div class="t" style="left:804.00px;top:118px;font-size:4.5px;color:#f2f2f2;transform:scaleX(0.690);font-weight:bold;">GT:</div>
<div class="t" style="left:809.80px;top:118px;font-size:4.5px;color:#cccccc;transform:scaleX(0.911);">4 objects</div>
<div class="t" style="left:804.00px;top:123px;font-size:4.5px;color:#f2f2f2;transform:scaleX(0.869);font-weight:bold;">Pred:</div>
<div class="t" style="left:814.20px;top:123px;font-size:4.5px;color:#cccccc;transform:scaleX(0.871);">4 objects found</div>
<svg style="left:804.00px;top:129.80px" width="53.90" height="33.00" viewBox="0 0 53.90 33.00"><filter id="n6" x="0" y="0" width="100%" height="100%" color-interpolation-filters="sRGB"><feTurbulence type="fractalNoise" baseFrequency="0.08 0.15" numOctaves="2" seed="6"/><feColorMatrix values="0.14 0 0 0 0.703  0.14 0 0 0 0.718  0.14 0 0 0 0.781  0 0 0 0 1"/></filter><rect width="100%" height="100%" filter="url(#n6)"/><path d="M16.5 2.5H46.5V29H19z" fill="#a9adbd" opacity="0.42"/><path d="M12.5 0L17.5 33" stroke="#e3e7f4" stroke-width="1.6" opacity="0.75"/><path d="M47 4V30" stroke="#e6eaf6" stroke-width="1.2" stroke-dasharray="5 1.5" opacity="0.75"/><rect x="26" y="16.5" width="3.6" height="3.4" fill="#23283c"/><rect x="30" y="16.6" width="7" height="3" fill="#8c92a6"/><rect x="37" y="16.4" width="5.4" height="3.4" fill="#2a2f44"/><circle cx="42.8" cy="11.5" r="1.1" fill="#e07a3a"/><circle cx="43.6" cy="19.6" r="1.1" fill="#e07a3a"/></svg>
<div class="b" style="left:804.30px;top:128.60px;width:12.00px;height:6.20px;background:#1f1f21;"></div>
<svg style="left:805.20px;top:129.30px" width="4" height="5" viewBox="0 0 4 5"><rect x="0.3" y="2" width="3.2" height="2.7" fill="#f2f2f2"/><path d="M1 2.2V1.4a0.9 0.9 0 0 1 1.8 0V2.2" fill="none" stroke="#f2f2f2" stroke-width="0.6"/></svg>
<div class="t" style="left:810.90px;top:131px;font-size:4.5px;color:#e4e4e4;transform:scaleX(0.681);">Val</div>
<div class="t" style="left:821.40px;top:167px;font-size:4.5px;color:#cccccc;transform:scaleX(0.943);">images_2</div>
<div class="t" style="left:804.00px;top:179px;font-size:4.5px;color:#f2f2f2;transform:scaleX(0.690);font-weight:bold;">GT:</div>
<div class="t" style="left:809.80px;top:179px;font-size:4.5px;color:#cccccc;transform:scaleX(0.911);">3 objects</div>
<div class="t" style="left:804.00px;top:184px;font-size:4.5px;color:#f2f2f2;transform:scaleX(0.869);font-weight:bold;">Pred:</div>
<div class="t" style="left:814.20px;top:184px;font-size:4.5px;color:#cccccc;transform:scaleX(0.871);">3 objects found</div>
<svg style="left:804.00px;top:190.70px" width="53.90" height="33.00" viewBox="0 0 53.90 33.00"><filter id="n7" x="0" y="0" width="100%" height="100%" color-interpolation-filters="sRGB"><feTurbulence type="fractalNoise" baseFrequency="0.08 0.15" numOctaves="2" seed="9"/><feColorMatrix values="0.14 0 0 0 0.703  0.14 0 0 0 0.718  0.14 0 0 0 0.781  0 0 0 0 1"/></filter><rect width="100%" height="100%" filter="url(#n7)"/><path d="M16.5 2.5H46.5V29H19z" fill="#a9adbd" opacity="0.42"/><path d="M12.5 0L17.5 33" stroke="#e3e7f4" stroke-width="1.6" opacity="0.75"/><path d="M47 4V30" stroke="#e6eaf6" stroke-width="1.2" stroke-dasharray="5 1.5" opacity="0.75"/><path d="M12 13L27 18M13 20L25 22.5M38 10L36 18" stroke="#5a6074" stroke-width="0.5" fill="none"/><rect x="29" y="15.5" width="7.4" height="3.6" fill="#23283c" transform="rotate(8 32 17)"/><rect x="26" y="20.6" width="5.4" height="3.2" fill="#2a2f44" transform="rotate(8 28 22)"/><rect x="36.5" y="17" width="3.2" height="3" fill="#3a3f54"/></svg>
<div class="b" style="left:804.30px;top:189.50px;width:15.60px;height:6.20px;background:#1f1f21;"></div>
<svg style="left:805.20px;top:190.20px" width="4" height="5" viewBox="0 0 4 5"><rect x="0.3" y="2" width="3.2" height="2.7" fill="#f2f2f2"/><path d="M1 2.2V1.4a0.9 0.9 0 0 1 1.8 0V2.2" fill="none" stroke="#f2f2f2" stroke-width="0.6"/></svg>
<div class="t" style="left:810.90px;top:191px;font-size:4.5px;color:#e4e4e4;transform:scaleX(0.773);">Train</div>
<div class="t" style="left:821.40px;top:227px;font-size:4.5px;color:#cccccc;transform:scaleX(0.943);">images_3</div>
<div class="t" style="left:804.00px;top:240px;font-size:4.5px;color:#f2f2f2;transform:scaleX(0.690);font-weight:bold;">GT:</div>
<div class="t" style="left:809.80px;top:240px;font-size:4.5px;color:#cccccc;transform:scaleX(0.911);">5 objects</div>
<div class="t" style="left:804.00px;top:245px;font-size:4.5px;color:#f2f2f2;transform:scaleX(0.869);font-weight:bold;">Pred:</div>
<div class="t" style="left:814.20px;top:245px;font-size:4.5px;color:#cccccc;transform:scaleX(0.871);">5 objects found</div>
<svg style="left:804.00px;top:251.70px" width="53.90" height="21.20" viewBox="0 0 53.90 21.20"><filter id="n8" x="0" y="0" width="100%" height="100%" color-interpolation-filters="sRGB"><feTurbulence type="fractalNoise" baseFrequency="0.08 0.15" numOctaves="2" seed="12"/><feColorMatrix values="0.14 0 0 0 0.703  0.14 0 0 0 0.718  0.14 0 0 0 0.781  0 0 0 0 1"/></filter><rect width="100%" height="100%" filter="url(#n8)"/><path d="M16.5 2.5H46.5V29H19z" fill="#a9adbd" opacity="0.42"/><path d="M12.5 0L17.5 33" stroke="#e3e7f4" stroke-width="1.6" opacity="0.75"/><path d="M47 4V30" stroke="#e6eaf6" stroke-width="1.2" stroke-dasharray="5 1.5" opacity="0.75"/><path d="M18 17L30 13M24 14L33 12" stroke="#4a5064" stroke-width="0.5"/><path d="M31 12l5-4 3 3-4 5z" fill="#2a2f44"/><rect x="38" y="5" width="2.4" height="4" fill="#23283c"/><rect x="27" y="12.4" width="3.6" height="2" fill="#23283c"/></svg>
<div class="b" style="left:804.30px;top:250.50px;width:15.60px;height:6.20px;background:#1f1f21;"></div>
<svg style="left:805.20px;top:251.20px" width="4" height="5" viewBox="0 0 4 5"><rect x="0.3" y="2" width="3.2" height="2.7" fill="#f2f2f2"/><path d="M1 2.2V1.4a0.9 0.9 0 0 1 1.8 0V2.2" fill="none" stroke="#f2f2f2" stroke-width="0.6"/></svg>
<div class="t" style="left:810.90px;top:252px;font-size:4.5px;color:#e4e4e4;transform:scaleX(0.773);">Train</div>
<div class="b" style="left:158.60px;top:291.00px;width:474.60px;height:252.80px;background:#343436;"></div>
<div class="b" style="left:158.60px;top:291.00px;width:1.40px;height:252.80px;background:#2a2a2c;"></div>
<div class="b" style="left:159.80px;top:291.00px;width:61.20px;height:11.50px;background:#3b3b3d;"></div>
<div class="t" style="left:161.00px;top:296px;font-size:5.6px;color:#d8d8d8;transform:scaleX(0.926);">Dataset and annotations</div>
<div class="b" style="left:222.00px;top:291.00px;width:33.00px;height:11.50px;background:#3b3b3d;"></div>
<div class="t" style="left:223.10px;top:296px;font-size:5.6px;color:#d8d8d8;transform:scaleX(0.935);">Dataset split</div>
<div class="b" style="left:256.00px;top:291.00px;width:49.00px;height:11.50px;background:#3b3b3d;"></div>
<div class="t" style="left:257.80px;top:296px;font-size:5.6px;color:#d8d8d8;transform:scaleX(0.932);">Data augmentation</div>
<div class="b" style="left:306.00px;top:291.00px;width:18.00px;height:11.50px;background:#3b3b3d;"></div>
<div class="t" style="left:308.00px;top:296px;font-size:5.6px;color:#d8d8d8;transform:scaleX(0.971);">Tools</div>
<div class="b" style="left:324.80px;top:291.00px;width:55.00px;height:11.50px;background:#109fd9;"></div>
<div class="t" style="left:327.50px;top:296px;font-size:5.6px;color:#66d2ff;transform:scaleX(0.913);">Validation and results</div>
<div class="b" style="left:380.60px;top:291.00px;width:38.80px;height:11.50px;background:#3b3b3d;"></div>
<div class="t" style="left:382.20px;top:296px;font-size:5.6px;color:#d8d8d8;transform:scaleX(0.926);">Inference tests</div>
<div class="b" style="left:159.80px;top:302.40px;width:473.40px;height:1.40px;background:#28647f;"></div>
<div class="b" style="left:174.00px;top:306.20px;width:130.00px;height:7.60px;background:#3e3e40;"></div>
<div class="t" style="left:164.00px;top:309px;font-size:4.6px;color:#cccccc;transform:scaleX(0.926);">Tool:</div>
<div class="t" style="left:175.80px;top:309px;font-size:4.6px;color:#cccccc;transform:scaleX(0.880);">Tool 1</div>
<svg style="left:290.5px;top:307.8px" width="12" height="5" viewBox="0 0 12 5"><path d="M0.6 0.5h3.6L2.4 4z" fill="#fff"/><circle cx="8.8" cy="2.4" r="1.9" fill="none" stroke="#1b8fc4" stroke-width="0.8"/></svg>
<div class="t" style="left:162.20px;top:318px;font-size:4.6px;color:#cccccc;transform:scaleX(0.830);">Splits:</div>
<div class="b" style="left:174.40px;top:317.80px;width:2.8px;height:2.8px;border-radius:50%;background:#f4f4f4"></div>
<div class="t" style="left:179.00px;top:318px;font-size:4.6px;color:#cccccc;transform:scaleX(0.978);">All</div>
<div class="b" style="left:186.20px;top:317.80px;width:2.8px;height:2.8px;border-radius:50%;background:#3d3d3f"></div>
<div class="t" style="left:191.00px;top:318px;font-size:4.6px;color:#cccccc;transform:scaleX(0.869);">Training</div>
<div class="b" style="left:207.20px;top:317.80px;width:2.8px;height:2.8px;border-radius:50%;background:#3d3d3f"></div>
<div class="t" style="left:211.70px;top:318px;font-size:4.6px;color:#cccccc;transform:scaleX(0.921);">Validation</div>
<div class="b" style="left:232.10px;top:317.80px;width:2.8px;height:2.8px;border-radius:50%;background:#3d3d3f"></div>
<div class="t" style="left:236.70px;top:318px;font-size:4.6px;color:#cccccc;transform:scaleX(0.865);">Test</div>
<div class="b" style="left:251.90px;top:315.40px;width:51.60px;height:7.60px;background:#3e3e40;"></div>
<div class="t" style="left:253.40px;top:318px;font-size:4.6px;color:#cccccc;transform:scaleX(0.870);">Add images to test dataset,</div>
<div class="b" style="left:162.20px;top:327.80px;width:141.60px;height:213.80px;border:0.6px solid #3c3c3e;box-sizing:border-box"></div>
<div class="b" style="left:162.20px;top:325.60px;width:14.00px;height:4.60px;background:#3c3c3e;"></div>
<div class="t" style="left:163.40px;top:327px;font-size:4.5px;color:#cccccc;transform:scaleX(0.800);">Metrics</div>
<div class="t" style="left:200.80px;top:334px;font-size:4.6px;color:#cccccc;transform:scaleX(0.879);">Weighted error:</div>
<div class="t" style="left:230.50px;top:334px;font-size:4.6px;color:#cccccc;transform:scaleX(0.833);">0.116</div>
<svg style="left:294.60px;top:332.00px" width="6" height="6" viewBox="-3 -3 6 6"><circle r="2.3" fill="none" stroke="#1f95d4" stroke-width="0.62"/><path d="M0 -1v0.4M0 -0.1v1.1" stroke="#1f95d4" stroke-width="0.65"/></svg>
<div class="b" style="left:165px;top:343px;width:137px;height:13.4px;border:0.6px solid #3c3c3e;box-sizing:border-box"></div>
<div class="b" style="left:165.00px;top:340.00px;width:63.40px;height:6.00px;background:#3a3a3c;"></div>
<div class="t" style="left:166.00px;top:342px;font-size:4.6px;color:#cccccc;transform:scaleX(0.885);">Adapting the classification rule</div>
<svg style="left:221.70px;top:339.20px" width="6" height="6" viewBox="-3 -3 6 6"><circle r="2.3" fill="none" stroke="#1f95d4" stroke-width="0.62"/><path d="M0 -1v0.4M0 -0.1v1.1" stroke="#1f95d4" stroke-width="0.65"/></svg>
<div class="t" style="left:189.00px;top:349px;font-size:4.6px;color:#cccccc;transform:scaleX(0.877);">Classification threshold:</div>
<div class="b" style="left:233.60px;top:347.40px;width:64.00px;height:7.20px;background:#3e3e40;"></div>
<div class="t" style="left:234.80px;top:349px;font-size:4.5px;color:#cccccc;transform:scaleX(0.837);">0,9944610000</div>
<svg style="left:294.6px;top:348px" width="3" height="6" viewBox="0 0 3 6"><path d="M0.5 2.2h2L1.5 0.8zM0.5 3.6h2L1.5 5z" fill="#eee"/></svg>
<div class="b" style="left:165.60px;top:360.60px;width:39.40px;height:8.60px;background:#3e3e40;"></div>
<div class="t" style="left:167.20px;top:364px;font-size:4.6px;color:#cccccc;transform:scaleX(0.852);">Pixel based metrics</div>
<div class="b" style="left:205.50px;top:358.70px;width:28.90px;height:10.50px;background:#109fd9;"></div>
<div class="t" style="left:207.80px;top:364px;font-size:4.6px;color:#7fd0f7;transform:scaleX(0.877);">Blob metrics</div>
<div class="b" style="left:235.00px;top:360.60px;width:29.80px;height:8.60px;background:#3e3e40;"></div>
<div class="t" style="left:236.20px;top:364px;font-size:4.6px;color:#cccccc;transform:scaleX(0.865);">Image metrics</div>
<div class="b" style="left:165.60px;top:369.20px;width:134.40px;height:174.60px;background:#29292b;"></div>
<div class="b" style="left:168px;top:375.6px;width:129.2px;height:41.6px;border:0.6px solid #3c3c3e;box-sizing:border-box"></div>
<div class="b" style="left:168.00px;top:372.60px;width:94.20px;height:6.20px;background:#3a3a3c;"></div>
<div class="t" style="left:169.00px;top:374px;font-size:4.6px;color:#cccccc;transform:scaleX(0.897);">Metrics for foreground/defective blob detection</div>
<svg style="left:254.00px;top:371.80px" width="6" height="6" viewBox="-3 -3 6 6"><circle r="2.3" fill="none" stroke="#1f95d4" stroke-width="0.62"/><path d="M0 -1v0.4M0 -0.1v1.1" stroke="#1f95d4" stroke-width="0.65"/></svg>
<div class="t" style="left:216.90px;top:381px;font-size:4.6px;color:#cccccc;transform:scaleX(0.832);">Recall:</div>
<div class="t" style="left:230.50px;top:381px;font-size:4.6px;color:#cccccc;transform:scaleX(0.808);">0.958</div>
<svg style="left:288.90px;top:379.70px" width="6" height="6" viewBox="-3 -3 6 6"><circle r="2.3" fill="none" stroke="#1f95d4" stroke-width="0.62"/><path d="M0 -1v0.4M0 -0.1v1.1" stroke="#1f95d4" stroke-width="0.65"/></svg>
<div class="t" style="left:211.40px;top:388px;font-size:4.6px;color:#cccccc;transform:scaleX(0.852);">Precision:</div>
<div class="t" style="left:230.50px;top:388px;font-size:4.6px;color:#cccccc;transform:scaleX(0.808);">0.994</div>
<svg style="left:288.90px;top:386.80px" width="6" height="6" viewBox="-3 -3 6 6"><circle r="2.3" fill="none" stroke="#1f95d4" stroke-width="0.62"/><path d="M0 -1v0.4M0 -0.1v1.1" stroke="#1f95d4" stroke-width="0.65"/></svg>
<div class="t" style="left:212.50px;top:396px;font-size:4.6px;color:#cccccc;transform:scaleX(0.797);">F1-Score:</div>
<div class="t" style="left:230.50px;top:396px;font-size:4.6px;color:#cccccc;transform:scaleX(0.808);">0.976</div>
<svg style="left:288.90px;top:394.10px" width="6" height="6" viewBox="-3 -3 6 6"><circle r="2.3" fill="none" stroke="#1f95d4" stroke-width="0.62"/><path d="M0 -1v0.4M0 -0.1v1.1" stroke="#1f95d4" stroke-width="0.65"/></svg>
<div class="t" style="left:196.10px;top:403px;font-size:4.6px;color:#cccccc;transform:scaleX(0.855);">Average precision:</div>
<div class="t" style="left:230.50px;top:403px;font-size:4.6px;color:#cccccc;transform:scaleX(0.813);">0.988051</div>
<svg style="left:288.90px;top:401.40px" width="6" height="6" viewBox="-3 -3 6 6"><circle r="2.3" fill="none" stroke="#1f95d4" stroke-width="0.62"/><path d="M0 -1v0.4M0 -0.1v1.1" stroke="#1f95d4" stroke-width="0.65"/></svg>
<div class="t" style="left:183.60px;top:410px;font-size:4.6px;color:#cccccc;transform:scaleX(0.834);">Best achievable F1-Score:</div>
<div class="t" style="left:230.50px;top:410px;font-size:4.6px;color:#cccccc;transform:scaleX(0.812);">0.97561</div>
<svg style="left:288.90px;top:408.70px" width="6" height="6" viewBox="-3 -3 6 6"><circle r="2.3" fill="none" stroke="#1f95d4" stroke-width="0.62"/><path d="M0 -1v0.4M0 -0.1v1.1" stroke="#1f95d4" stroke-width="0.65"/></svg>
<div class="b" style="left:168px;top:422.6px;width:129.2px;height:84px;border:0.6px solid #3c3c3e;box-sizing:border-box"></div>
<div class="b" style="left:168.00px;top:419.50px;width:39.80px;height:6.00px;background:#3a3a3c;"></div>
<div class="t" style="left:169.00px;top:421px;font-size:4.6px;color:#cccccc;transform:scaleX(0.884);">Confusion matrix</div>
<svg style="left:199.70px;top:418.80px" width="6" height="6" viewBox="-3 -3 6 6"><circle r="2.3" fill="none" stroke="#1f95d4" stroke-width="0.62"/><path d="M0 -1v0.4M0 -0.1v1.1" stroke="#1f95d4" stroke-width="0.65"/></svg>
<div class="t" style="left:226.60px;top:431px;font-size:4.6px;color:#cccccc;transform:scaleX(0.863);">True labels</div>
<div class="b" style="left:180.90px;top:436.80px;width:110.90px;height:57.80px;background:#343436;"></div>
<div class="t" style="left:205.00px;top:439px;font-size:4.6px;color:#cccccc;transform:scaleX(0.880);">Background</div>
<div class="t" style="left:230.20px;top:439px;font-size:4.6px;color:#f4f4f4;transform:scaleX(0.875);font-weight:bold;">Defect</div>
<div class="t" style="left:181.60px;top:446px;font-size:4.6px;color:#cccccc;transform:scaleX(0.864);">Background</div>
<div class="t" style="left:205.50px;top:446px;font-size:4.6px;color:#cccccc;transform:scaleX(0.797);">- / -</div>
<div class="t" style="left:227.70px;top:446px;font-size:4.6px;color:#cccccc;transform:scaleX(0.946);">7 / -</div>
<div class="t" style="left:181.60px;top:453px;font-size:4.6px;color:#f4f4f4;transform:scaleX(0.853);font-weight:bold;">Defect</div>
<div class="t" style="left:205.50px;top:453px;font-size:4.6px;color:#cccccc;transform:scaleX(0.745);">- / 1</div>
<div class="b" style="left:226.70px;top:450.40px;width:18.80px;height:7.00px;background:#169fe2;"></div>
<div class="t" style="left:228.20px;top:453px;font-size:4.5px;color:#8fd0f3;transform:scaleX(0.831);">160 / 163</div>
<div class="t" style="left:174.84px;top:480.80px;font-size:4.1px;color:#c4c4c4;transform:rotate(-90deg) scaleX(0.997);">Predicted labels</div>
<div class="b" style="left:181.00px;top:497.00px;width:17.90px;height:6.40px;background:#434345;"></div>
<div class="t" style="left:182.10px;top:499px;font-size:4.5px;color:#cccccc;transform:scaleX(0.871);">Select all</div>
<div class="b" style="left:200.80px;top:497.00px;width:45.90px;height:6.40px;background:#434345;"></div>
<div class="t" style="left:201.90px;top:499px;font-size:4.5px;color:#cccccc;transform:scaleX(0.895);">Select wrong predictions</div>
<div class="b" style="left:248.20px;top:497.00px;width:43.70px;height:6.40px;background:#434345;"></div>
<div class="t" style="left:249.30px;top:499px;font-size:4.5px;color:#cccccc;transform:scaleX(0.896);">Select good predictions</div>
<svg style="left:305px;top:304px" width="5" height="240" viewBox="0 0 5 240"><path d="M1.5 3.6h2L2.5 2z" fill="#ddd"/><rect x="1.5" y="6" width="2.3" height="170" fill="#3d3d3f"/><path d="M1.5 235h2L2.5 236.6z" fill="#ddd"/></svg>
<div class="b" style="left:310.10px;top:303.80px;width:1.00px;height:240.00px;background:#454547;"></div>
<div class="t" style="left:313.90px;top:310px;font-size:4.6px;color:#f2f2f2;transform:scaleX(0.877);font-weight:bold;">Images</div>
<div class="b" style="left:345.00px;top:308.50px;width:29.80px;height:6.50px;background:#3e3e40;"></div>
<div class="t" style="left:346.40px;top:310px;font-size:4.5px;color:#777779;transform:scaleX(0.865);">Filter filenames</div>
<svg style="left:374px;top:318px" width="5" height="226" viewBox="0 0 5 226"><path d="M1.3 3.6h2L2.3 2z" fill="#ddd"/><rect x="1.4" y="5.2" width="2.2" height="5.4" fill="#222224"/><path d="M1.3 218.8h2L2.3 220.4z" fill="#ddd"/></svg>
<div class="t" style="left:317.20px;top:325px;font-size:4.5px;color:#cccccc;transform:scaleX(0.882);">GT: 1 blobs | Pred:1 blobs</div>
<svg style="left:317.70px;top:333.30px" width="53.80" height="33.50" viewBox="0 0 53.80 33.50"><filter id="n9" x="0" y="0" width="100%" height="100%" color-interpolation-filters="sRGB"><feTurbulence type="fractalNoise" baseFrequency="0.7" numOctaves="2" seed="21"/><feColorMatrix values="0.58 0 0 0 -0.066  0.43 0 0 0 -0.054  0.32 0 0 0 -0.038  0 0 0 0 1"/></filter><rect width="100%" height="100%" filter="url(#n9)"/></svg>
<div class="b" style="left:317.70px;top:329.50px;width:15.70px;height:6.20px;background:#1f1f21;"></div>
<svg style="left:318.60px;top:330.20px" width="4" height="5" viewBox="0 0 4 5"><rect x="0.3" y="2" width="3.2" height="2.7" fill="#f2f2f2"/><path d="M1 2.2V1.4a0.9 0.9 0 0 1 1.8 0V2.2" fill="none" stroke="#f2f2f2" stroke-width="0.6"/></svg>
<div class="t" style="left:324.30px;top:331px;font-size:4.5px;color:#e4e4e4;transform:scaleX(0.783);">Train</div>
<div class="t" style="left:335.20px;top:373px;font-size:4.5px;color:#cccccc;transform:scaleX(1.033);">Defect_0</div>
<div class="b" style="left:315.6px;top:382.80px;width:57.9px;height:57.2px;border:0.8px solid #20627c;box-sizing:border-box"></div>
<div class="t" style="left:317.20px;top:385px;font-size:4.5px;color:#cccccc;transform:scaleX(0.882);">GT: 1 blobs | Pred:1 blobs</div>
<svg style="left:317.70px;top:394.10px" width="53.80" height="33.50" viewBox="0 0 53.80 33.50"><filter id="n10" x="0" y="0" width="100%" height="100%" color-interpolation-filters="sRGB"><feTurbulence type="fractalNoise" baseFrequency="0.7" numOctaves="2" seed="22"/><feColorMatrix values="0.58 0 0 0 -0.066  0.43 0 0 0 -0.054  0.32 0 0 0 -0.038  0 0 0 0 1"/></filter><rect width="100%" height="100%" filter="url(#n10)"/></svg>
<div class="b" style="left:317.70px;top:390.30px;width:15.70px;height:6.20px;background:#1f1f21;"></div>
<svg style="left:318.60px;top:391.00px" width="4" height="5" viewBox="0 0 4 5"><rect x="0.3" y="2" width="3.2" height="2.7" fill="#f2f2f2"/><path d="M1 2.2V1.4a0.9 0.9 0 0 1 1.8 0V2.2" fill="none" stroke="#f2f2f2" stroke-width="0.6"/></svg>
<div class="t" style="left:324.30px;top:392px;font-size:4.5px;color:#e4e4e4;transform:scaleX(0.783);">Train</div>
<div class="t" style="left:335.20px;top:434px;font-size:4.5px;color:#cccccc;transform:scaleX(1.033);">Defect_1</div>
<div class="t" style="left:317.20px;top:446px;font-size:4.5px;color:#cccccc;transform:scaleX(0.882);">GT: 1 blobs | Pred:1 blobs</div>
<svg style="left:317.70px;top:454.90px" width="53.80" height="33.50" viewBox="0 0 53.80 33.50"><filter id="n11" x="0" y="0" width="100%" height="100%" color-interpolation-filters="sRGB"><feTurbulence type="fractalNoise" baseFrequency="0.7" numOctaves="2" seed="23"/><feColorMatrix values="0.58 0 0 0 -0.066  0.43 0 0 0 -0.054  0.32 0 0 0 -0.038  0 0 0 0 1"/></filter><rect width="100%" height="100%" filter="url(#n11)"/></svg>
<div class="b" style="left:317.70px;top:451.10px;width:15.70px;height:6.20px;background:#1f1f21;"></div>
<svg style="left:318.60px;top:451.80px" width="4" height="5" viewBox="0 0 4 5"><rect x="0.3" y="2" width="3.2" height="2.7" fill="#f2f2f2"/><path d="M1 2.2V1.4a0.9 0.9 0 0 1 1.8 0V2.2" fill="none" stroke="#f2f2f2" stroke-width="0.6"/></svg>
<div class="t" style="left:324.30px;top:453px;font-size:4.5px;color:#e4e4e4;transform:scaleX(0.783);">Train</div>
<div class="t" style="left:335.20px;top:495px;font-size:4.5px;color:#cccccc;transform:scaleX(1.033);">Defect_2</div>
<div class="t" style="left:317.20px;top:507px;font-size:4.5px;color:#cccccc;transform:scaleX(0.882);">GT: 1 blobs | Pred:2 blobs</div>
<svg style="left:317.70px;top:515.60px" width="53.80" height="24.20" viewBox="0 0 53.80 24.20"><filter id="n12" x="0" y="0" width="100%" height="100%" color-interpolation-filters="sRGB"><feTurbulence type="fractalNoise" baseFrequency="0.7" numOctaves="2" seed="24"/><feColorMatrix values="0.58 0 0 0 -0.066  0.43 0 0 0 -0.054  0.32 0 0 0 -0.038  0 0 0 0 1"/></filter><rect width="100%" height="100%" filter="url(#n12)"/></svg>
<div class="b" style="left:317.70px;top:511.80px;width:12.00px;height:6.20px;background:#1f1f21;"></div>
<svg style="left:318.60px;top:512.50px" width="4" height="5" viewBox="0 0 4 5"><rect x="0.3" y="2" width="3.2" height="2.7" fill="#f2f2f2"/><path d="M1 2.2V1.4a0.9 0.9 0 0 1 1.8 0V2.2" fill="none" stroke="#f2f2f2" stroke-width="0.6"/></svg>
<div class="t" style="left:324.30px;top:514px;font-size:4.5px;color:#e4e4e4;transform:scaleX(0.681);">Val</div>
<div class="b" style="left:380.60px;top:303.80px;width:2.20px;height:240.00px;background:#343436;"></div>
<div class="b" style="left:382.00px;top:303.80px;width:0.60px;height:240.00px;background:#47474a;"></div>
<div class="t" style="left:385.00px;top:310px;font-size:4.6px;color:#f2f2f2;transform:scaleX(0.839);font-weight:bold;">Viewing:</div>
<div class="t" style="left:402.80px;top:310px;font-size:4.5px;color:#cccccc;transform:scaleX(0.844);">Defect_1</div>
<div class="b" style="left:441.00px;top:308.20px;width:13.00px;height:7.00px;background:#3e3e40;"></div>
<div class="t" style="left:442.70px;top:310px;font-size:4.6px;color:#cccccc;transform:scaleX(0.790);">Show:</div>
<svg style="left:456.20px;top:308.60px" width="6" height="6" viewBox="-3 -3 6 6"><circle cx="-0.5" cy="-0.5" r="1.8" fill="none" stroke="#1b8fd0" stroke-width="0.9"/><path d="M0.8 0.8L2.6 2.6" stroke="#1b8fd0" stroke-width="1.1"/></svg>
<div class="b" style="left:463.50px;top:308.20px;width:27.50px;height:7.00px;background:#3a3a3c;"></div>
<div class="t" style="left:465.80px;top:310px;font-size:4.5px;color:#cccccc;transform:scaleX(0.830);">43,85 %</div>
<svg style="left:487.6px;top:308.8px" width="3" height="6" viewBox="0 0 3 6"><path d="M0.5 2.2h2L1.5 0.8zM0.5 3.6h2L1.5 5z" fill="#eee"/></svg>
<svg style="left:492.50px;top:308.60px" width="6" height="6" viewBox="-3 -3 6 6"><circle cx="-0.5" cy="-0.5" r="1.8" fill="none" stroke="#1b8fd0" stroke-width="0.9"/><path d="M0.8 0.8L2.6 2.6" stroke="#1b8fd0" stroke-width="1.1"/></svg>
<div class="b" style="left:501.30px;top:308.20px;width:6.90px;height:7.00px;background:#3e3e40;"></div>
<div class="t" style="left:502.60px;top:310px;font-size:4.6px;color:#cccccc;transform:scaleX(0.861);">Fit</div>
<div class="b" style="left:509.00px;top:308.20px;width:37.00px;height:7.00px;background:#3e3e40;"></div>
<div class="t" style="left:511.20px;top:310px;font-size:4.6px;color:#cccccc;transform:scaleX(0.890);">Original resolution</div>
<div class="b" style="left:559.00px;top:308.20px;width:27.80px;height:7.00px;background:#3e3e40;"></div>
<div class="t" style="left:560.20px;top:310px;font-size:4.6px;color:#cccccc;transform:scaleX(0.895);">Segmentation</div>
<div class="t" style="left:588.60px;top:310px;font-size:4.6px;color:#cccccc;transform:scaleX(0.898);">Objects</div>
<div class="b" style="left:604.00px;top:308.20px;width:16.20px;height:7.00px;background:#3e3e40;"></div>
<div class="t" style="left:605.40px;top:310px;font-size:4.6px;color:#cccccc;transform:scaleX(0.861);">Results</div>
<div class="b" style="left:604.20px;top:314.40px;width:15.80px;height:1.20px;background:#1b8fc4;"></div>
<div class="b" style="left:385.00px;top:316.80px;width:248.20px;height:9.40px;background:#3f3f41;"></div>
<svg style="left:385.90px;top:318.70px" width="5" height="5" viewBox="0 0 5 5"><path d="M0.6 2.6L1.8 4L4.2 0.6" fill="none" stroke="#fff" stroke-width="0.8"/></svg>
<div class="t" style="left:391.40px;top:320px;font-size:4.5px;color:#cccccc;transform:scaleX(0.940);">Ground truth segmentation</div>
<svg style="left:444.30px;top:318.70px" width="5" height="5" viewBox="0 0 5 5"><path d="M0.6 2.6L1.8 4L4.2 0.6" fill="none" stroke="#fff" stroke-width="0.8"/></svg>
<div class="t" style="left:449.80px;top:320px;font-size:4.5px;color:#cccccc;transform:scaleX(0.914);">Predicted segmentation</div>
<div class="b" style="left:495.50px;top:318.00px;width:57.10px;height:7.00px;background:#444446;"></div>
<div class="t" style="left:497.00px;top:320px;font-size:4.5px;color:#cccccc;transform:scaleX(0.896);">Use prediction as ground truth</div>
<svg style="left:389px;top:358px" width="240.6" height="150.2" viewBox="0 0 240.6 150.2">
<defs>
<radialGradient id="cg0" cx="0.4" cy="0.35" r="0.75"><stop offset="0" stop-color="#66493c"/><stop offset="0.55" stop-color="#47301f"/><stop offset="1" stop-color="#2a1a10"/></radialGradient>
<radialGradient id="cg1" cx="0.45" cy="0.35" r="0.75"><stop offset="0" stop-color="#573e32"/><stop offset="0.55" stop-color="#3e291b"/><stop offset="1" stop-color="#24160d"/></radialGradient>
<radialGradient id="cg2" cx="0.4" cy="0.4" r="0.75"><stop offset="0" stop-color="#6e5146"/><stop offset="0.5" stop-color="#4e3524"/><stop offset="1" stop-color="#2e1c12"/></radialGradient>
<filter id="cbl" x="0" y="0" width="100%" height="100%"><feGaussianBlur stdDeviation="0.45"/></filter>
<g id="cb0"><ellipse rx="7.2" ry="4.7" fill="url(#cg0)" stroke="#1d120d" stroke-width="0.8"/></g>
<g id="cb1"><ellipse rx="6.8" ry="4.6" fill="url(#cg1)" stroke="#1d120d" stroke-width="0.8"/></g>
<g id="cb2"><ellipse rx="7.4" ry="4.9" fill="url(#cg2)" stroke="#1d120d" stroke-width="0.8"/></g>
<g id="cb0f"><ellipse rx="7.2" ry="4.7" fill="url(#cg0)" stroke="#1d120d" stroke-width="0.8"/><path d="M-5.4 0.3C-2 -1 2 1.2 5.4 -0.2" fill="none" stroke="#21120c" stroke-width="1"/></g>
<g id="cb1f"><ellipse rx="6.8" ry="4.6" fill="url(#cg1)" stroke="#1d120d" stroke-width="0.8"/><path d="M-5 0.3C-2 -1 2 1.2 5 -0.2" fill="none" stroke="#1c0f0a" stroke-width="1"/></g>
<g id="cb2f"><ellipse rx="7.4" ry="4.9" fill="url(#cg2)" stroke="#1d120d" stroke-width="0.8"/><path d="M-5.6 0.3C-2 -1 2 1.2 5.6 -0.2" fill="none" stroke="#24140d" stroke-width="1"/></g>
</defs>
<rect width="240.6" height="150.2" fill="#24160f"/>
<g filter="url(#cbl)"><use href="#cb1" transform="translate(159.7 35.2) rotate(97) scale(1.28)"/><use href="#cb2f" transform="translate(83.7 5.4) rotate(164) scale(1.06)"/><use href="#cb2" transform="translate(133.5 90.1) rotate(34) scale(1.25)"/><use href="#cb0" transform="translate(183.9 146.4) rotate(179) scale(1.20)"/><use href="#cb2" transform="translate(231.3 159.7) rotate(46) scale(1.03)"/><use href="#cb2" transform="translate(19.0 25.8) rotate(124) scale(1.21)"/><use href="#cb1" transform="translate(133.3 26.4) rotate(83) scale(1.22)"/><use href="#cb1f" transform="translate(43.1 21.5) rotate(96) scale(1.03)"/><use href="#cb1" transform="translate(114.1 132.2) rotate(46) scale(1.25)"/><use href="#cb2f" transform="translate(11.4 70.0) rotate(7) scale(1.18)"/><use href="#cb0f" transform="translate(32.2 22.5) rotate(24) scale(1.07)"/><use href="#cb0" transform="translate(202.0 43.0) rotate(1) scale(1.24)"/><use href="#cb2f" transform="translate(134.0 34.0) rotate(129) scale(1.27)"/><use href="#cb0" transform="translate(59.5 13.1) rotate(140) scale(1.04)"/><use href="#cb0" transform="translate(255.7 140.4) rotate(7) scale(1.00)"/><use href="#cb2f" transform="translate(244.7 159.6) rotate(109) scale(0.98)"/><use href="#cb1f" transform="translate(31.8 137.8) rotate(168) scale(1.23)"/><use href="#cb2f" transform="translate(-3.0 157.9) rotate(39) scale(1.09)"/><use href="#cb0f" transform="translate(219.3 22.8) rotate(119) scale(1.16)"/><use href="#cb2" transform="translate(75.2 148.5) rotate(126) scale(1.09)"/><use href="#cb2" transform="translate(185.4 13.5) rotate(23) scale(0.97)"/><use href="#cb0f" transform="translate(88.1 12.1) rotate(124) scale(1.09)"/><use href="#cb2f" transform="translate(3.3 98.2) rotate(159) scale(1.18)"/><use href="#cb2f" transform="translate(56.2 99.6) rotate(175) scale(1.18)"/><use href="#cb0f" transform="translate(128.1 59.6) rotate(5) scale(1.01)"/><use href="#cb0" transform="translate(44.7 160.6) rotate(2) scale(1.27)"/><use href="#cb1" transform="translate(53.0 41.5) rotate(109) scale(1.07)"/><use href="#cb1" transform="translate(188.0 52.2) rotate(65) scale(1.07)"/><use href="#cb1f" transform="translate(-0.8 53.5) rotate(6) scale(1.11)"/><use href="#cb0" transform="translate(5.8 41.0) rotate(15) scale(1.09)"/><use href="#cb1" transform="translate(4.9 158.9) rotate(124) scale(1.00)"/><use href="#cb0" transform="translate(146.3 72.8) rotate(142) scale(1.18)"/><use href="#cb1" transform="translate(191.4 100.6) rotate(57) scale(0.96)"/><use href="#cb0" transform="translate(120.4 99.9) rotate(100) scale(1.21)"/><use href="#cb2f" transform="translate(15.0 -6.4) rotate(75) scale(1.03)"/><use href="#cb1f" transform="translate(178.6 138.6) rotate(32) scale(1.23)"/><use href="#cb1f" transform="translate(16.3 118.6) rotate(111) scale(1.01)"/><use href="#cb0" transform="translate(256.9 102.0) rotate(57) scale(1.03)"/><use href="#cb2" transform="translate(165.5 99.2) rotate(145) scale(1.05)"/><use href="#cb1f" transform="translate(36.7 13.6) rotate(66) scale(1.06)"/><use href="#cb0" transform="translate(33.0 117.4) rotate(126) scale(1.01)"/><use href="#cb2" transform="translate(219.7 99.6) rotate(80) scale(1.15)"/><use href="#cb0f" transform="translate(215.0 2.2) rotate(81) scale(0.96)"/><use href="#cb1f" transform="translate(4.1 137.9) rotate(163) scale(1.14)"/><use href="#cb0" transform="translate(144.5 6.1) rotate(135) scale(1.00)"/><use href="#cb0" transform="translate(222.5 -5.4) rotate(114) scale(0.97)"/><use href="#cb0f" transform="translate(86.9 55.2) rotate(88) scale(1.22)"/><use href="#cb2f" transform="translate(114.6 32.2) rotate(28) scale(1.12)"/><use href="#cb2" transform="translate(131.3 82.0) rotate(55) scale(1.08)"/><use href="#cb1" transform="translate(34.3 147.4) rotate(142) scale(1.02)"/><use href="#cb2f" transform="translate(149.7 34.7) rotate(13) scale(1.12)"/><use href="#cb1" transform="translate(261.1 -4.9) rotate(88) scale(1.27)"/><use href="#cb2f" transform="translate(169.6 44.1) rotate(151) scale(1.05)"/><use href="#cb1" transform="translate(192.4 118.0) rotate(24) scale(1.05)"/><use href="#cb0" transform="translate(212.5 72.4) rotate(83) scale(1.24)"/><use href="#cb1" transform="translate(203.4 137.7) rotate(129) scale(1.04)"/><use href="#cb2f" transform="translate(119.2 3.0) rotate(27) scale(1.25)"/><use href="#cb2" transform="translate(199.4 50.2) rotate(166) scale(1.05)"/><use href="#cb0" transform="translate(158.0 41.4) rotate(83) scale(1.24)"/><use href="#cb0f" transform="translate(11.5 13.0) rotate(84) scale(1.20)"/><use href="#cb2f" transform="translate(253.6 24.6) rotate(157) scale(1.11)"/><use href="#cb0f" transform="translate(221.6 147.4) rotate(5) scale(1.21)"/><use href="#cb0" transform="translate(246.6 54.6) rotate(90) scale(1.25)"/><use href="#cb1" transform="translate(196.4 -6.0) rotate(96) scale(1.15)"/><use href="#cb1" transform="translate(93.9 21.6) rotate(46) scale(1.20)"/><use href="#cb1" transform="translate(179.2 100.9) rotate(8) scale(1.28)"/><use href="#cb0" transform="translate(-7.3 26.7) rotate(130) scale(1.16)"/><use href="#cb0" transform="translate(192.9 6.3) rotate(25) scale(1.15)"/><use href="#cb1" transform="translate(110.1 109.9) rotate(49) scale(1.23)"/><use href="#cb1" transform="translate(106.5 138.3) rotate(127) scale(0.98)"/><use href="#cb0" transform="translate(136.5 72.4) rotate(147) scale(1.26)"/><use href="#cb2" transform="translate(64.5 52.6) rotate(3) scale(1.13)"/><use href="#cb0f" transform="translate(17.4 102.1) rotate(155) scale(1.11)"/><use href="#cb2f" transform="translate(-5.1 64.6) rotate(141) scale(0.99)"/><use href="#cb1f" transform="translate(70.6 136.9) rotate(68) scale(0.95)"/><use href="#cb2f" transform="translate(257.9 127.4) rotate(94) scale(1.22)"/><use href="#cb2" transform="translate(0.5 72.4) rotate(6) scale(0.99)"/><use href="#cb1f" transform="translate(37.5 32.2) rotate(100) scale(1.06)"/><use href="#cb1" transform="translate(188.9 -6.8) rotate(42) scale(1.03)"/><use href="#cb2" transform="translate(226.7 43.3) rotate(109) scale(1.21)"/><use href="#cb1" transform="translate(98.1 111.7) rotate(81) scale(1.24)"/><use href="#cb0" transform="translate(52.8 92.2) rotate(65) scale(1.16)"/><use href="#cb1f" transform="translate(48.4 -3.0) rotate(105) scale(1.16)"/><use href="#cb1f" transform="translate(249.6 147.8) rotate(149) scale(1.06)"/><use href="#cb1" transform="translate(212.0 11.9) rotate(48) scale(0.95)"/><use href="#cb2f" transform="translate(88.6 148.7) rotate(171) scale(1.22)"/><use href="#cb0" transform="translate(227.9 24.1) rotate(67) scale(1.27)"/><use href="#cb1" transform="translate(227.2 64.7) rotate(70) scale(1.15)"/><use href="#cb2" transform="translate(57.7 4.6) rotate(109) scale(1.06)"/><use href="#cb0" transform="translate(224.7 54.6) rotate(177) scale(1.11)"/><use href="#cb1" transform="translate(245.9 72.9) rotate(27) scale(1.00)"/><use href="#cb2" transform="translate(248.1 127.6) rotate(108) scale(1.00)"/><use href="#cb0f" transform="translate(227.8 98.2) rotate(33) scale(0.98)"/><use href="#cb1" transform="translate(128.5 161.0) rotate(135) scale(1.02)"/><use href="#cb0" transform="translate(198.6 131.4) rotate(161) scale(1.09)"/><use href="#cb1" transform="translate(138.9 111.3) rotate(86) scale(1.04)"/><use href="#cb0f" transform="translate(161.8 92.2) rotate(120) scale(1.10)"/><use href="#cb1" transform="translate(75.2 35.6) rotate(49) scale(1.03)"/><use href="#cb0" transform="translate(185.6 112.7) rotate(103) scale(1.00)"/><use href="#cb1f" transform="translate(27.4 33.6) rotate(163) scale(1.28)"/><use href="#cb0f" transform="translate(19.4 136.5) rotate(71) scale(1.20)"/><use href="#cb0" transform="translate(71.1 4.0) rotate(41) scale(1.01)"/><use href="#cb1f" transform="translate(55.1 140.4) rotate(56) scale(1.24)"/><use href="#cb2" transform="translate(225.2 32.1) rotate(137) scale(1.05)"/><use href="#cb0" transform="translate(106.3 160.3) rotate(133) scale(1.18)"/><use href="#cb2" transform="translate(26.9 -6.9) rotate(113) scale(1.26)"/><use href="#cb0" transform="translate(45.4 6.1) rotate(93) scale(1.07)"/><use href="#cb1" transform="translate(70.7 120.2) rotate(41) scale(1.17)"/><use href="#cb2" transform="translate(172.4 12.8) rotate(36) scale(1.24)"/><use href="#cb2" transform="translate(236.3 71.2) rotate(172) scale(1.04)"/><use href="#cb0" transform="translate(44.3 119.8) rotate(80) scale(1.07)"/><use href="#cb1f" transform="translate(226.2 14.7) rotate(174) scale(1.05)"/><use href="#cb0" transform="translate(77.1 -5.6) rotate(32) scale(1.21)"/><use href="#cb2f" transform="translate(162.2 51.7) rotate(70) scale(1.07)"/><use href="#cb2" transform="translate(263.1 150.7) rotate(10) scale(0.99)"/><use href="#cb1" transform="translate(12.8 150.0) rotate(78) scale(1.18)"/><use href="#cb1" transform="translate(96.1 12.1) rotate(109) scale(1.02)"/><use href="#cb1f" transform="translate(151.8 110.0) rotate(43) scale(1.03)"/><use href="#cb1f" transform="translate(197.3 150.1) rotate(116) scale(1.27)"/><use href="#cb1" transform="translate(145.1 45.9) rotate(15) scale(0.98)"/><use href="#cb0" transform="translate(103.1 63.3) rotate(146) scale(1.27)"/><use href="#cb2" transform="translate(121.2 -7.1) rotate(125) scale(0.97)"/><use href="#cb0f" transform="translate(234.5 12.1) rotate(118) scale(1.03)"/><use href="#cb1" transform="translate(71.3 70.6) rotate(129) scale(1.07)"/><use href="#cb0f" transform="translate(87.5 71.9) rotate(134) scale(1.21)"/><use href="#cb1" transform="translate(57.4 60.8) rotate(113) scale(1.09)"/><use href="#cb1" transform="translate(153.2 3.4) rotate(43) scale(1.14)"/><use href="#cb2f" transform="translate(219.7 40.6) rotate(21) scale(1.01)"/><use href="#cb1f" transform="translate(-0.2 32.7) rotate(133) scale(1.27)"/><use href="#cb0" transform="translate(40.0 111.4) rotate(106) scale(1.20)"/><use href="#cb2f" transform="translate(131.6 103.5) rotate(10) scale(1.08)"/><use href="#cb2" transform="translate(112.1 -2.7) rotate(125) scale(1.15)"/><use href="#cb2" transform="translate(149.9 53.7) rotate(70) scale(1.10)"/><use href="#cb0f" transform="translate(127.7 118.2) rotate(36) scale(1.17)"/><use href="#cb0" transform="translate(31.2 6.4) rotate(40) scale(1.22)"/><use href="#cb1" transform="translate(63.2 93.6) rotate(177) scale(1.12)"/><use href="#cb2f" transform="translate(231.4 117.4) rotate(34) scale(1.13)"/><use href="#cb2f" transform="translate(87.6 110.1) rotate(148) scale(1.11)"/><use href="#cb0" transform="translate(-8.9 2.6) rotate(48) scale(1.22)"/><use href="#cb0f" transform="translate(178.5 22.0) rotate(57) scale(1.23)"/><use href="#cb2" transform="translate(230.5 140.1) rotate(74) scale(1.17)"/><use href="#cb0f" transform="translate(9.4 109.0) rotate(162) scale(1.25)"/><use href="#cb1" transform="translate(96.3 90.0) rotate(89) scale(1.06)"/><use href="#cb1f" transform="translate(158.7 147.6) rotate(37) scale(0.97)"/><use href="#cb2f" transform="translate(4.3 7.3) rotate(124) scale(1.25)"/><use href="#cb0f" transform="translate(116.7 42.2) rotate(141) scale(0.98)"/><use href="#cb0f" transform="translate(171.0 128.8) rotate(14) scale(1.05)"/><use href="#cb1" transform="translate(93.4 158.0) rotate(118) scale(1.00)"/><use href="#cb2" transform="translate(261.1 51.3) rotate(36) scale(1.08)"/><use href="#cb0" transform="translate(48.8 109.8) rotate(68) scale(1.10)"/><use href="#cb1f" transform="translate(79.0 100.2) rotate(139) scale(1.03)"/><use href="#cb0" transform="translate(207.9 52.8) rotate(171) scale(0.99)"/><use href="#cb0" transform="translate(83.6 24.0) rotate(86) scale(1.18)"/><use href="#cb1f" transform="translate(95.9 45.7) rotate(45) scale(1.09)"/><use href="#cb1f" transform="translate(95.6 139.5) rotate(84) scale(1.06)"/><use href="#cb2f" transform="translate(103.5 82.6) rotate(137) scale(0.99)"/><use href="#cb1" transform="translate(47.0 149.9) rotate(135) scale(1.22)"/><use href="#cb2" transform="translate(167.4 26.1) rotate(29) scale(1.26)"/><use href="#cb2f" transform="translate(160.3 71.4) rotate(160) scale(0.98)"/><use href="#cb0" transform="translate(192.7 42.2) rotate(179) scale(1.12)"/><use href="#cb1" transform="translate(115.0 80.3) rotate(2) scale(1.09)"/><use href="#cb1" transform="translate(45.9 80.2) rotate(128) scale(1.00)"/><use href="#cb0" transform="translate(146.2 128.9) rotate(101) scale(1.14)"/><use href="#cb1" transform="translate(3.9 82.2) rotate(133) scale(1.25)"/><use href="#cb1" transform="translate(80.7 62.6) rotate(54) scale(0.99)"/><use href="#cb2f" transform="translate(169.5 83.3) rotate(179) scale(1.20)"/><use href="#cb0f" transform="translate(155.9 63.2) rotate(110) scale(1.12)"/><use href="#cb2f" transform="translate(72.1 89.6) rotate(23) scale(0.98)"/><use href="#cb1f" transform="translate(117.0 158.9) rotate(95) scale(1.14)"/><use href="#cb2f" transform="translate(252.3 4.5) rotate(71) scale(1.05)"/><use href="#cb0" transform="translate(13.5 132.0) rotate(120) scale(1.00)"/><use href="#cb0" transform="translate(233.6 32.1) rotate(120) scale(1.26)"/><use href="#cb1" transform="translate(44.3 101.5) rotate(69) scale(1.21)"/><use href="#cb0f" transform="translate(45.7 139.0) rotate(45) scale(1.24)"/><use href="#cb2f" transform="translate(9.9 89.1) rotate(149) scale(1.11)"/><use href="#cb0f" transform="translate(89.8 99.5) rotate(106) scale(1.22)"/><use href="#cb0" transform="translate(68.5 158.5) rotate(96) scale(1.16)"/><use href="#cb2" transform="translate(7.6 24.1) rotate(126) scale(1.12)"/><use href="#cb1" transform="translate(158.7 16.2) rotate(89) scale(1.23)"/><use href="#cb1f" transform="translate(165.8 120.1) rotate(171) scale(1.04)"/><use href="#cb0f" transform="translate(49.0 55.3) rotate(28) scale(0.99)"/><use href="#cb1" transform="translate(-9.3 83.6) rotate(40) scale(1.27)"/><use href="#cb1" transform="translate(178.2 41.9) rotate(33) scale(1.03)"/><use href="#cb0" transform="translate(-2.8 129.0) rotate(132) scale(0.99)"/><use href="#cb0f" transform="translate(30.1 63.9) rotate(32) scale(1.20)"/><use href="#cb2" transform="translate(61.0 151.3) rotate(61) scale(1.12)"/><use href="#cb1f" transform="translate(173.6 110.5) rotate(142) scale(1.26)"/><use href="#cb0" transform="translate(53.7 157.3) rotate(101) scale(1.06)"/><use href="#cb0" transform="translate(136.6 12.8) rotate(121) scale(1.04)"/><use href="#cb2f" transform="translate(1.1 109.8) rotate(29) scale(1.27)"/><use href="#cb1f" transform="translate(198.5 74.1) rotate(100) scale(1.06)"/><use href="#cb1" transform="translate(244.1 79.8) rotate(141) scale(1.02)"/><use href="#cb1f" transform="translate(62.7 128.9) rotate(82) scale(1.19)"/><use href="#cb0" transform="translate(179.6 63.8) rotate(41) scale(0.98)"/><use href="#cb0f" transform="translate(8.5 65.0) rotate(94) scale(1.18)"/><use href="#cb2f" transform="translate(122.5 108.2) rotate(87) scale(1.00)"/><use href="#cb0" transform="translate(205.9 161.0) rotate(22) scale(0.99)"/><use href="#cb0" transform="translate(145.8 84.2) rotate(30) scale(1.26)"/><use href="#cb2f" transform="translate(116.5 24.1) rotate(84) scale(0.99)"/><use href="#cb1f" transform="translate(119.6 139.5) rotate(143) scale(1.03)"/><use href="#cb1" transform="translate(-5.2 43.3) rotate(56) scale(1.19)"/><use href="#cb0f" transform="translate(33.9 102.1) rotate(30) scale(1.27)"/><use href="#cb2f" transform="translate(124.7 51.1) rotate(102) scale(0.96)"/><use href="#cb1" transform="translate(174.5 35.7) rotate(42) scale(1.03)"/><use href="#cb0" transform="translate(103.1 23.9) rotate(175) scale(0.98)"/><use href="#cb2" transform="translate(241.0 102.0) rotate(152) scale(1.25)"/><use href="#cb1" transform="translate(170.5 53.5) rotate(42) scale(1.20)"/><use href="#cb2f" transform="translate(24.6 89.2) rotate(90) scale(1.13)"/><use href="#cb2f" transform="translate(110.6 89.5) rotate(21) scale(1.01)"/><use href="#cb1" transform="translate(197.9 32.9) rotate(125) scale(1.19)"/><use href="#cb0f" transform="translate(52.9 117.9) rotate(90) scale(1.04)"/><use href="#cb2" transform="translate(236.7 127.9) rotate(100) scale(1.04)"/><use href="#cb2" transform="translate(60.5 35.0) rotate(103) scale(1.07)"/><use href="#cb1f" transform="translate(184.8 30.9) rotate(121) scale(1.09)"/><use href="#cb0" transform="translate(57.7 25.4) rotate(96) scale(1.17)"/><use href="#cb0" transform="translate(145.8 11.7) rotate(176) scale(1.12)"/><use href="#cb2" transform="translate(165.1 158.4) rotate(151) scale(1.26)"/><use href="#cb2f" transform="translate(219.5 60.1) rotate(31) scale(1.25)"/><use href="#cb2" transform="translate(230.1 4.8) rotate(125) scale(1.10)"/><use href="#cb1" transform="translate(122.3 147.4) rotate(80) scale(1.26)"/><use href="#cb1f" transform="translate(27.0 131.4) rotate(133) scale(1.20)"/><use href="#cb2f" transform="translate(52.7 83.6) rotate(119) scale(1.24)"/><use href="#cb2f" transform="translate(82.4 84.1) rotate(18) scale(1.14)"/><use href="#cb2" transform="translate(220.1 111.5) rotate(151) scale(1.25)"/><use href="#cb0f" transform="translate(261.0 107.6) rotate(80) scale(1.12)"/><use href="#cb2" transform="translate(241.8 3.4) rotate(158) scale(1.26)"/><use href="#cb0f" transform="translate(110.2 71.6) rotate(52) scale(1.20)"/><use href="#cb1" transform="translate(182.5 4.8) rotate(94) scale(0.96)"/><use href="#cb2" transform="translate(146.0 91.2) rotate(68) scale(1.00)"/><use href="#cb0f" transform="translate(9.8 52.2) rotate(115) scale(0.98)"/><use href="#cb2" transform="translate(171.3 -5.2) rotate(127) scale(1.28)"/><use href="#cb0" transform="translate(144.4 59.7) rotate(169) scale(1.00)"/><use href="#cb2" transform="translate(-2.2 150.1) rotate(113) scale(1.26)"/><use href="#cb0" transform="translate(220.0 130.8) rotate(165) scale(1.08)"/><use href="#cb0f" transform="translate(111.3 13.5) rotate(167) scale(1.04)"/><use href="#cb2f" transform="translate(203.5 4.9) rotate(141) scale(0.99)"/><use href="#cb2f" transform="translate(34.3 -6.4) rotate(24) scale(1.09)"/><use href="#cb1" transform="translate(155.9 81.4) rotate(41) scale(1.27)"/><use href="#cb1f" transform="translate(39.4 91.0) rotate(120) scale(1.23)"/><use href="#cb2f" transform="translate(249.1 109.0) rotate(177) scale(0.96)"/><use href="#cb2f" transform="translate(250.0 12.4) rotate(71) scale(1.05)"/><use href="#cb2" transform="translate(101.7 33.5) rotate(0) scale(1.08)"/><use href="#cb0" transform="translate(134.1 150.0) rotate(43) scale(1.16)"/><use href="#cb0" transform="translate(152.5 158.5) rotate(14) scale(1.08)"/><use href="#cb0f" transform="translate(245.1 30.9) rotate(75) scale(1.18)"/><use href="#cb2" transform="translate(196.7 108.6) rotate(149) scale(1.24)"/><use href="#cb2f" transform="translate(235.2 -7.0) rotate(18) scale(1.14)"/><use href="#cb0" transform="translate(154.2 137.8) rotate(38) scale(1.24)"/><use href="#cb2" transform="translate(252.1 83.8) rotate(141) scale(1.17)"/><use href="#cb1f" transform="translate(151.6 -5.6) rotate(89) scale(1.02)"/><use href="#cb2f" transform="translate(209.4 108.8) rotate(127) scale(1.22)"/><use href="#cb2" transform="translate(212.0 -4.7) rotate(122) scale(0.97)"/><use href="#cb1" transform="translate(63.4 -4.4) rotate(89) scale(1.13)"/><use href="#cb0f" transform="translate(239.3 43.7) rotate(39) scale(1.07)"/><use href="#cb0" transform="translate(46.5 13.5) rotate(92) scale(0.97)"/><use href="#cb2" transform="translate(161.1 129.3) rotate(179) scale(1.06)"/><use href="#cb2f" transform="translate(235.4 93.4) rotate(77) scale(0.95)"/><use href="#cb0f" transform="translate(216.8 139.9) rotate(155) scale(1.26)"/><use href="#cb1" transform="translate(-4.7 98.5) rotate(128) scale(1.10)"/><use href="#cb1" transform="translate(110.6 146.5) rotate(25) scale(1.18)"/><use href="#cb1" transform="translate(204.5 81.2) rotate(119) scale(1.07)"/><use href="#cb0f" transform="translate(99.5 151.4) rotate(98) scale(1.03)"/><use href="#cb1" transform="translate(260.0 70.3) rotate(19) scale(1.02)"/><use href="#cb2" transform="translate(33.3 82.6) rotate(82) scale(1.05)"/><use href="#cb2" transform="translate(118.2 61.6) rotate(80) scale(1.26)"/><use href="#cb1f" transform="translate(74.6 130.1) rotate(1) scale(1.20)"/><use href="#cb0" transform="translate(128.0 42.7) rotate(87) scale(1.13)"/><use href="#cb1" transform="translate(-1.1 -6.8) rotate(13) scale(1.13)"/><use href="#cb1f" transform="translate(65.8 60.9) rotate(4) scale(0.95)"/><use href="#cb2" transform="translate(22.3 150.3) rotate(162) scale(1.24)"/><use href="#cb0f" transform="translate(132.3 7.5) rotate(63) scale(1.13)"/><use href="#cb1" transform="translate(198.0 11.9) rotate(69) scale(1.12)"/><use href="#cb2" transform="translate(242.6 63.5) rotate(176) scale(1.10)"/><use href="#cb1" transform="translate(150.5 146.9) rotate(108) scale(1.10)"/><use href="#cb2" transform="translate(23.3 55.5) rotate(75) scale(0.97)"/><use href="#cb0f" transform="translate(10.7 33.5) rotate(22) scale(1.16)"/><use href="#cb0" transform="translate(136.2 127.0) rotate(82) scale(0.95)"/><use href="#cb0" transform="translate(155.9 118.7) rotate(49) scale(1.13)"/><use href="#cb0f" transform="translate(-4.3 140.0) rotate(104) scale(1.00)"/><use href="#cb1" transform="translate(2.2 89.5) rotate(96) scale(1.19)"/><use href="#cb2f" transform="translate(212.6 90.8) rotate(73) scale(0.97)"/><use href="#cb1" transform="translate(38.0 130.3) rotate(74) scale(0.98)"/><use href="#cb0" transform="translate(100.9 71.1) rotate(97) scale(1.02)"/><use href="#cb2" transform="translate(140.6 159.4) rotate(41) scale(1.10)"/><use href="#cb0f" transform="translate(183.7 90.1) rotate(155) scale(1.01)"/><use href="#cb2" transform="translate(218.0 118.3) rotate(83) scale(1.13)"/><use href="#cb0" transform="translate(68.9 41.9) rotate(57) scale(1.04)"/><use href="#cb0f" transform="translate(256.5 62.0) rotate(103) scale(1.05)"/><use href="#cb0f" transform="translate(163.7 107.9) rotate(53) scale(1.27)"/><use href="#cb0" transform="translate(87.0 -2.7) rotate(52) scale(1.27)"/><use href="#cb1f" transform="translate(257.4 40.6) rotate(165) scale(1.22)"/><use href="#cb1f" transform="translate(262.9 35.7) rotate(180) scale(1.26)"/><use href="#cb2" transform="translate(164.8 141.2) rotate(138) scale(0.96)"/><use href="#cb1" transform="translate(18.8 64.4) rotate(67) scale(1.07)"/><use href="#cb0f" transform="translate(208.9 35.3) rotate(91) scale(1.02)"/><use href="#cb2f" transform="translate(169.5 2.3) rotate(162) scale(1.17)"/><use href="#cb2" transform="translate(203.2 121.3) rotate(52) scale(1.10)"/><use href="#cb1" transform="translate(75.2 109.7) rotate(140) scale(1.27)"/><use href="#cb2f" transform="translate(50.0 35.8) rotate(74) scale(1.09)"/><use href="#cb2f" transform="translate(260.9 14.6) rotate(118) scale(1.19)"/><use href="#cb1" transform="translate(185.7 72.2) rotate(136) scale(1.16)"/><use href="#cb1" transform="translate(24.9 111.7) rotate(87) scale(0.98)"/><use href="#cb0" transform="translate(42.8 44.9) rotate(7) scale(0.96)"/><use href="#cb0f" transform="translate(20.3 42.5) rotate(56) scale(1.22)"/><use href="#cb1f" transform="translate(86.6 91.3) rotate(38) scale(1.09)"/><use href="#cb1f" transform="translate(257.3 118.9) rotate(29) scale(0.97)"/><use href="#cb1" transform="translate(171.6 88.6) rotate(165) scale(1.17)"/><use href="#cb1f" transform="translate(194.0 156.4) rotate(10) scale(1.03)"/><use href="#cb1" transform="translate(92.3 122.5) rotate(61) scale(1.03)"/><use href="#cb0f" transform="translate(94.0 7.1) rotate(135) scale(1.11)"/><use href="#cb1" transform="translate(164.5 64.6) rotate(129) scale(0.95)"/><use href="#cb2" transform="translate(-2.7 15.3) rotate(161) scale(1.00)"/><use href="#cb1" transform="translate(124.6 92.0) rotate(7) scale(1.19)"/><use href="#cb2f" transform="translate(33.2 160.4) rotate(77) scale(1.04)"/><use href="#cb2" transform="translate(204.9 62.0) rotate(94) scale(1.04)"/><use href="#cb1" transform="translate(141.0 102.2) rotate(83) scale(0.98)"/><use href="#cb1f" transform="translate(61.9 69.9) rotate(116) scale(1.05)"/><use href="#cb2" transform="translate(92.8 78.9) rotate(67) scale(1.06)"/><use href="#cb1" transform="translate(123.9 72.0) rotate(33) scale(1.11)"/><use href="#cb0f" transform="translate(85.5 129.8) rotate(78) scale(1.07)"/><use href="#cb2f" transform="translate(193.3 81.5) rotate(144) scale(1.07)"/><use href="#cb2" transform="translate(83.6 159.1) rotate(11) scale(1.17)"/><use href="#cb1" transform="translate(86.4 32.5) rotate(174) scale(0.99)"/><use href="#cb2f" transform="translate(157.9 21.9) rotate(92) scale(1.24)"/><use href="#cb1" transform="translate(188.5 130.7) rotate(178) scale(1.24)"/><use href="#cb2f" transform="translate(137.3 -2.0) rotate(51) scale(1.08)"/><use href="#cb0" transform="translate(114.2 53.5) rotate(29) scale(1.21)"/><use href="#cb0" transform="translate(221.7 73.4) rotate(111) scale(1.19)"/><use href="#cb0" transform="translate(181.2 156.2) rotate(71) scale(1.01)"/><use href="#cb1" transform="translate(68.9 103.5) rotate(108) scale(1.05)"/><use href="#cb2f" transform="translate(24.7 17.1) rotate(29) scale(1.09)"/><use href="#cb1" transform="translate(237.0 51.2) rotate(110) scale(1.03)"/><use href="#cb0" transform="translate(101.9 128.6) rotate(151) scale(1.27)"/><use href="#cb1" transform="translate(19.5 2.5) rotate(93) scale(1.25)"/><use href="#cb2" transform="translate(233.6 149.6) rotate(167) scale(1.01)"/><use href="#cb2" transform="translate(19.2 82.4) rotate(120) scale(1.17)"/><use href="#cb0" transform="translate(68.0 25.7) rotate(42) scale(1.20)"/><use href="#cb0f" transform="translate(126.1 34.7) rotate(161) scale(0.98)"/><use href="#cb1f" transform="translate(18.0 161.1) rotate(86) scale(1.02)"/><use href="#cb1" transform="translate(181.9 80.8) rotate(48) scale(1.07)"/><use href="#cb2" transform="translate(22.0 69.5) rotate(137) scale(1.02)"/><use href="#cb0f" transform="translate(36.3 52.3) rotate(179) scale(1.07)"/><use href="#cb1f" transform="translate(234.5 112.3) rotate(89) scale(0.96)"/><use href="#cb2" transform="translate(251.0 88.9) rotate(23) scale(0.96)"/><use href="#cb2f" transform="translate(159.6 -5.4) rotate(15) scale(1.10)"/><use href="#cb0f" transform="translate(79.7 138.3) rotate(60) scale(1.16)"/><use href="#cb1" transform="translate(247.1 -7.5) rotate(111) scale(1.00)"/><use href="#cb1" transform="translate(153.3 101.2) rotate(159) scale(1.12)"/><use href="#cb2f" transform="translate(171.7 70.7) rotate(90) scale(1.08)"/><use href="#cb1" transform="translate(214.2 83.4) rotate(141) scale(1.00)"/><use href="#cb1" transform="translate(245.0 138.6) rotate(18) scale(1.05)"/><use href="#cb0f" transform="translate(65.1 83.5) rotate(19) scale(1.03)"/><use href="#cb2f" transform="translate(254.9 155.8) rotate(44) scale(1.07)"/><use href="#cb2" transform="translate(46.6 74.5) rotate(136) scale(0.98)"/><use href="#cb2" transform="translate(-7.8 121.8) rotate(140) scale(1.24)"/><use href="#cb0f" transform="translate(64.5 110.2) rotate(144) scale(1.00)"/><use href="#cb2f" transform="translate(101.4 50.2) rotate(57) scale(1.15)"/><use href="#cb0f" transform="translate(194.7 136.8) rotate(145) scale(1.20)"/><use href="#cb0f" transform="translate(34.4 74.1) rotate(170) scale(0.99)"/><use href="#cb2" transform="translate(219.4 158.8) rotate(157) scale(1.01)"/><use href="#cb1f" transform="translate(30.8 42.5) rotate(35) scale(1.07)"/><use href="#cb2" transform="translate(211.1 146.0) rotate(116) scale(1.16)"/><use href="#cb2" transform="translate(260.1 92.6) rotate(66) scale(1.20)"/><use href="#cb0f" transform="translate(189.8 64.6) rotate(170) scale(1.04)"/><use href="#cb1f" transform="translate(73.7 53.2) rotate(133) scale(1.01)"/><use href="#cb2" transform="translate(141.9 26.3) rotate(13) scale(0.98)"/><use href="#cb0" transform="translate(105.4 40.4) rotate(55) scale(1.18)"/><use href="#cb0" transform="translate(97.1 -5.7) rotate(76) scale(1.27)"/><use href="#cb0" transform="translate(198.0 92.0) rotate(10) scale(1.14)"/><use href="#cb2f" transform="translate(117.9 122.6) rotate(45) scale(1.09)"/><use href="#cb0f" transform="translate(92.8 60.4) rotate(44) scale(1.00)"/><use href="#cb0f" transform="translate(145.6 121.5) rotate(114) scale(1.22)"/><use href="#cb2" transform="translate(78.5 121.8) rotate(70) scale(1.09)"/><use href="#cb2f" transform="translate(191.2 23.4) rotate(35) scale(0.95)"/><use href="#cb0" transform="translate(242.6 26.3) rotate(99) scale(1.19)"/><use href="#cb1" transform="translate(144.9 140.2) rotate(180) scale(1.15)"/><use href="#cb2" transform="translate(76.6 15.4) rotate(73) scale(1.13)"/><use href="#cb2" transform="translate(106.3 2.5) rotate(130) scale(1.10)"/><use href="#cb0" transform="translate(81.2 44.9) rotate(12) scale(1.22)"/><use href="#cb0" transform="translate(226.3 78.9) rotate(118) scale(1.03)"/><use href="#cb1f" transform="translate(244.5 118.1) rotate(58) scale(1.06)"/><use href="#cb2" transform="translate(3.4 122.1) rotate(89) scale(1.12)"/><use href="#cb2f" transform="translate(131.6 138.5) rotate(37) scale(1.26)"/><use href="#cb0" transform="translate(177.7 117.5) rotate(166) scale(1.25)"/><use href="#cb1" transform="translate(50.1 129.6) rotate(103) scale(1.09)"/><use href="#cb2f" transform="translate(171.1 147.7) rotate(29) scale(1.10)"/><use href="#cb1" transform="translate(43.5 61.3) rotate(157) scale(1.26)"/><use href="#cb1" transform="translate(125.3 16.9) rotate(47) scale(1.01)"/><use href="#cb2" transform="translate(135.5 50.8) rotate(147) scale(1.01)"/><use href="#cb0f" transform="translate(223.8 93.7) rotate(86) scale(1.09)"/><use href="#cb2f" transform="translate(107.6 120.4) rotate(58) scale(1.08)"/><use href="#cb2f" transform="translate(201.5 98.2) rotate(156) scale(1.11)"/><use href="#cb2" transform="translate(103.1 103.0) rotate(26) scale(1.27)"/><use href="#cb1f" transform="translate(211.5 128.8) rotate(115) scale(0.96)"/><use href="#cb2f" transform="translate(125.8 129.8) rotate(93) scale(1.12)"/><use href="#cb1" transform="translate(203.8 23.4) rotate(106) scale(1.07)"/></g>
<path d="M174 56L177 60.4L173.6 66L171 70.6L168.6 73L166 70L167.4 65L170 59z" fill="#2a8fca"/>
</svg>
<div class="b" style="left:643.90px;top:290.30px;width:222.90px;height:251.30px;background:#343436;"></div>
<div class="b" style="left:643.90px;top:290.30px;width:1.20px;height:251.30px;background:#2a2a2c;"></div>
<div class="b" style="left:708.00px;top:290.30px;width:33.00px;height:10.60px;background:#3b3b3d;"></div>
<div class="t" style="left:709.20px;top:294px;font-size:5.6px;color:#d8d8d8;transform:scaleX(0.925);">Dataset split</div>
<div class="b" style="left:742.00px;top:290.30px;width:49.00px;height:10.60px;background:#3b3b3d;"></div>
<div class="t" style="left:743.90px;top:294px;font-size:5.6px;color:#d8d8d8;transform:scaleX(0.926);">Data augmentation</div>
<div class="b" style="left:792.00px;top:290.30px;width:17.20px;height:10.60px;background:#3b3b3d;"></div>
<div class="t" style="left:794.40px;top:294px;font-size:5.6px;color:#d8d8d8;transform:scaleX(0.926);">Tools</div>
<div class="b" style="left:809.80px;top:290.30px;width:56.90px;height:10.60px;background:#109fd9;"></div>
<div class="t" style="left:812.70px;top:294px;font-size:5.6px;color:#66d2ff;transform:scaleX(0.922);">Validation and results</div>
<div class="b" style="left:645.00px;top:290.30px;width:62.20px;height:10.60px;background:#262628;"></div>
<div class="t" style="left:647.00px;top:294px;font-size:5.6px;color:#dcdcdc;transform:scaleX(0.922);">Dataset and annotations</div>
<div class="b" style="left:645.00px;top:300.50px;width:221.80px;height:1.40px;background:#28647f;"></div>
<div class="b" style="left:648.40px;top:303.80px;width:144.00px;height:237.80px;border:0.6px solid #3c3c3e;box-sizing:border-box"></div>
<div class="b" style="left:648.40px;top:301.60px;width:14.00px;height:4.60px;background:#3c3c3e;"></div>
<div class="t" style="left:649.60px;top:303px;font-size:4.5px;color:#cccccc;transform:scaleX(0.800);">Metrics</div>
<div class="t" style="left:674.70px;top:309px;font-size:4.6px;color:#cccccc;transform:scaleX(0.868);">Error on good images:</div>
<div class="t" style="left:716.10px;top:309px;font-size:4.6px;color:#cccccc;transform:scaleX(0.814);">0.0297507</div>
<svg style="left:780.40px;top:307.60px" width="6" height="6" viewBox="-3 -3 6 6"><circle r="2.3" fill="none" stroke="#1f95d4" stroke-width="0.62"/><path d="M0 -1v0.4M0 -0.1v1.1" stroke="#1f95d4" stroke-width="0.65"/></svg>
<div class="t" style="left:705.60px;top:316px;font-size:4.6px;color:#cccccc;transform:scaleX(0.783);">AUC:</div>
<div class="t" style="left:716.10px;top:316px;font-size:4.6px;color:#cccccc;transform:scaleX(0.743);">1</div>
<svg style="left:780.40px;top:314.60px" width="6" height="6" viewBox="-3 -3 6 6"><circle r="2.3" fill="none" stroke="#1f95d4" stroke-width="0.62"/><path d="M0 -1v0.4M0 -0.1v1.1" stroke="#1f95d4" stroke-width="0.65"/></svg>
<div class="t" style="left:668.90px;top:323px;font-size:4.6px;color:#cccccc;transform:scaleX(0.848);">Best achievable accuracy:</div>
<div class="t" style="left:716.10px;top:323px;font-size:4.6px;color:#cccccc;transform:scaleX(0.743);">1</div>
<svg style="left:780.40px;top:321.90px" width="6" height="6" viewBox="-3 -3 6 6"><circle r="2.3" fill="none" stroke="#1f95d4" stroke-width="0.62"/><path d="M0 -1v0.4M0 -0.1v1.1" stroke="#1f95d4" stroke-width="0.65"/></svg>
<div class="b" style="left:651px;top:333px;width:133.6px;height:34.6px;border:0.6px solid #3c3c3e;box-sizing:border-box"></div>
<div class="b" style="left:651.00px;top:330.10px;width:56.50px;height:5.60px;background:#3a3a3c;"></div>
<div class="t" style="left:652.00px;top:331px;font-size:4.6px;color:#cccccc;transform:scaleX(0.882);">Adapting the classification rule</div>
<div class="t" style="left:654.00px;top:339px;font-size:4.6px;color:#cccccc;transform:scaleX(0.885);">Classification threshold:</div>
<div class="b" style="left:698.60px;top:337.00px;width:78.10px;height:7.20px;background:#3e3e40;"></div>
<div class="t" style="left:700.20px;top:339px;font-size:4.5px;color:#cccccc;transform:scaleX(0.845);">1,06841173</div>
<svg style="left:773.4px;top:337.6px" width="3" height="6" viewBox="0 0 3 6"><path d="M0.5 2.2h2L1.5 0.8zM0.5 3.6h2L1.5 5z" fill="#eee"/></svg>
<svg style="left:777.60px;top:337.50px" width="6" height="6" viewBox="-3 -3 6 6"><circle r="2.3" fill="none" stroke="#1f95d4" stroke-width="0.62"/><path d="M0 -1v0.4M0 -0.1v1.1" stroke="#1f95d4" stroke-width="0.65"/></svg>
<div class="t" style="left:680.30px;top:347px;font-size:4.6px;color:#cccccc;transform:scaleX(0.827);">Accuracy:</div>
<div class="t" style="left:699.20px;top:347px;font-size:4.6px;color:#cccccc;transform:scaleX(0.704);">1</div>
<svg style="left:777.60px;top:345.40px" width="6" height="6" viewBox="-3 -3 6 6"><circle r="2.3" fill="none" stroke="#1f95d4" stroke-width="0.62"/><path d="M0 -1v0.4M0 -0.1v1.1" stroke="#1f95d4" stroke-width="0.65"/></svg>
<div class="t" style="left:658.40px;top:354px;font-size:4.6px;color:#cccccc;transform:scaleX(0.883);">Defect detection rate:</div>
<div class="t" style="left:699.20px;top:354px;font-size:4.6px;color:#cccccc;transform:scaleX(0.704);">1</div>
<svg style="left:777.60px;top:352.60px" width="6" height="6" viewBox="-3 -3 6 6"><circle r="2.3" fill="none" stroke="#1f95d4" stroke-width="0.62"/><path d="M0 -1v0.4M0 -0.1v1.1" stroke="#1f95d4" stroke-width="0.65"/></svg>
<div class="t" style="left:660.00px;top:361px;font-size:4.6px;color:#cccccc;transform:scaleX(0.888);">Good detection rate:</div>
<div class="t" style="left:699.20px;top:361px;font-size:4.6px;color:#cccccc;transform:scaleX(0.704);">1</div>
<svg style="left:777.60px;top:359.60px" width="6" height="6" viewBox="-3 -3 6 6"><circle r="2.3" fill="none" stroke="#1f95d4" stroke-width="0.62"/><path d="M0 -1v0.4M0 -0.1v1.1" stroke="#1f95d4" stroke-width="0.65"/></svg>
<div class="b" style="left:651px;top:374px;width:134.4px;height:66.6px;border:0.6px solid #3c3c3e;box-sizing:border-box"></div>
<div class="b" style="left:651.00px;top:371.00px;width:32.80px;height:5.60px;background:#3a3a3c;"></div>
<div class="t" style="left:652.20px;top:372px;font-size:4.6px;color:#cccccc;transform:scaleX(0.878);">Confusion matrix</div>
<div class="t" style="left:712.30px;top:382px;font-size:4.6px;color:#cccccc;transform:scaleX(0.868);">True labels</div>
<div class="t" style="left:684.00px;top:391px;font-size:4.6px;color:#cccccc;transform:scaleX(0.853);">Good</div>
<div class="t" style="left:695.00px;top:391px;font-size:4.6px;color:#cccccc;transform:scaleX(0.874);">Not Good</div>
<div class="t" style="left:664.70px;top:397px;font-size:4.6px;color:#cccccc;transform:scaleX(0.862);">Good</div>
<div class="t" style="left:684.50px;top:397px;font-size:4.6px;color:#cccccc;transform:scaleX(0.743);">7</div>
<div class="t" style="left:695.50px;top:397px;font-size:4.6px;color:#cccccc;transform:scaleX(0.743);">0</div>
<div class="t" style="left:664.70px;top:404px;font-size:4.6px;color:#cccccc;transform:scaleX(0.874);">Not Good</div>
<div class="t" style="left:684.50px;top:403px;font-size:4.6px;color:#cccccc;transform:scaleX(0.743);">0</div>
<div class="t" style="left:695.50px;top:403px;font-size:4.6px;color:#cccccc;transform:scaleX(0.762);">10</div>
<div class="t" style="left:658.14px;top:422.10px;font-size:4.1px;color:#c4c4c4;transform:rotate(-90deg) scaleX(1.001);">Predicted labels</div>
<div class="b" style="left:665.00px;top:429.30px;width:21.90px;height:6.30px;background:#434345;"></div>
<div class="t" style="left:667.80px;top:431px;font-size:4.5px;color:#cccccc;transform:scaleX(0.876);">Select all</div>
<div class="b" style="left:689.20px;top:429.30px;width:45.80px;height:6.30px;background:#434345;"></div>
<div class="t" style="left:690.30px;top:431px;font-size:4.5px;color:#cccccc;transform:scaleX(0.895);">Select wrong predictions</div>
<div class="b" style="left:736.90px;top:429.30px;width:43.40px;height:6.30px;background:#434345;"></div>
<div class="t" style="left:738.00px;top:431px;font-size:4.5px;color:#cccccc;transform:scaleX(0.887);">Select good predictions</div>
<div class="b" style="left:651.00px;top:443.00px;width:35.40px;height:11.20px;background:#109fd9;"></div>
<div class="t" style="left:653.30px;top:448px;font-size:4.6px;color:#7fd0f7;transform:scaleX(0.872);">Score histogram</div>
<div class="b" style="left:687.00px;top:445.00px;width:23.30px;height:9.20px;background:#3e3e40;"></div>
<div class="t" style="left:688.40px;top:448px;font-size:4.6px;color:#cccccc;transform:scaleX(0.813);">ROC curve</div>
<div class="b" style="left:651.00px;top:454.20px;width:134.40px;height:90.00px;background:#2a2a2c;"></div>
<div class="b" style="left:654.20px;top:456.00px;width:128.80px;height:90.00px;background:#323234;"></div>
<svg style="left:654px;top:455px" width="130" height="90" viewBox="654 455 130 90">
<path d="M697.1 545V505.5L697.6 498.5L700.2 494.1L709.6 489.1L722.1 485.2L736.2 481.8L745.6 476.3L751.8 469.6L758.1 466.5L764 463.8L766.3 458.3H776.8V545z" fill="#3b3230"/>
<path d="M697.1 545V505.5L697.6 498.5L700.2 494.1L709.6 489.1L722.1 485.2L736.2 481.8L745.6 476.3L751.8 469.6L758.1 466.5L764 463.8L766.3 458.3H776.8" fill="none" stroke="#b0562c" stroke-width="0.7"/>
<rect x="665.8" y="458.3" width="14.4" height="90" fill="#343a34" stroke="#2f622f" stroke-width="0.5"/>
<path d="M683 458V545" stroke="#28288c" stroke-width="1.1"/>
<path d="M665.6 457V545" stroke="#8a8a8c" stroke-width="0.4"/>
<path d="M664.9 458.3h1.4M664.9 487.3h1.4" stroke="#ddd" stroke-width="0.6"/>
</svg>
<div class="t" style="left:656.34px;top:531.00px;font-size:4.1px;color:#c4c4c4;transform:rotate(-90deg) scaleX(1.138);">Cumulative proportion of images</div>
<svg style="left:791.5px;top:301.6px" width="5" height="240" viewBox="0 0 5 240"><path d="M1.4 3.2h2L2.4 1.6z" fill="#ddd"/><rect x="1.4" y="35.4" width="2.3" height="193" fill="#404042"/><path d="M1.4 236h2L2.4 237.6z" fill="#ddd"/></svg>
<div class="b" style="left:795.80px;top:302.00px;width:1.20px;height:239.60px;background:#454547;"></div>
<div class="t" style="left:799.50px;top:308px;font-size:4.6px;color:#f2f2f2;transform:scaleX(0.864);font-weight:bold;">Images</div>
<div class="b" style="left:831.00px;top:306.50px;width:31.20px;height:6.50px;background:#3e3e40;"></div>
<div class="t" style="left:832.60px;top:308px;font-size:4.5px;color:#777779;transform:scaleX(0.898);">Filter filenames</div>
<svg style="left:859.4px;top:316px" width="5" height="226" viewBox="0 0 5 226"><path d="M1.3 3.6h2L2.3 2z" fill="#ddd"/><rect x="1.5" y="4.8" width="2.2" height="35" fill="#222224"/><path d="M1.3 218.6h2L2.3 220.2z" fill="#ddd"/></svg>
<div class="b" style="left:802.60px;top:321.70px;width:49.60px;height:6.20px;background:#3e3e40;"></div>
<div class="b" style="left:803.90px;top:322.40px;width:5.00px;height:5.00px;background:#2a7fbe;"></div>
<div class="t" style="left:810.70px;top:323px;font-size:4.5px;color:#cccccc;transform:scaleX(0.881);">Good</div>
<div class="b" style="left:852.80px;top:321.70px;width:4.60px;height:6.20px;background:#3e3e40;"></div>
<svg style="left:853.4px;top:323.30px" width="4" height="4" viewBox="0 0 4 4"><path d="M0.2 0.2h3.2L1.8 3.2z" fill="#fff"/></svg>
<svg style="left:803.90px;top:332.50px" width="53.90" height="33.40" viewBox="0 0 53.90 33.40"><filter id="n13" x="0" y="0" width="100%" height="100%" color-interpolation-filters="sRGB"><feTurbulence type="fractalNoise" baseFrequency="0.65" numOctaves="2" seed="31"/><feColorMatrix values="0.15 0 0 0 0.082  0.2 0 0 0 0.116  0.13 0 0 0 0.072  0 0 0 0 1"/></filter><rect width="100%" height="100%" filter="url(#n13)"/></svg>
<div class="b" style="left:803.90px;top:329.30px;width:15.90px;height:6.20px;background:#1f1f21;"></div>
<svg style="left:804.80px;top:330.00px" width="4" height="5" viewBox="0 0 4 5"><rect x="0.3" y="2" width="3.2" height="2.7" fill="#f2f2f2"/><path d="M1 2.2V1.4a0.9 0.9 0 0 1 1.8 0V2.2" fill="none" stroke="#f2f2f2" stroke-width="0.6"/></svg>
<div class="t" style="left:810.50px;top:331px;font-size:4.5px;color:#e4e4e4;transform:scaleX(0.803);">Train</div>
<div class="t" style="left:822.40px;top:372px;font-size:4.5px;color:#cccccc;transform:scaleX(1.037);">Good_0</div>
<div class="b" style="left:802.60px;top:382.40px;width:49.60px;height:6.20px;background:#3e3e40;"></div>
<div class="b" style="left:803.90px;top:383.10px;width:5.00px;height:5.00px;background:#2a7fbe;"></div>
<div class="t" style="left:810.70px;top:384px;font-size:4.5px;color:#cccccc;transform:scaleX(0.881);">Good</div>
<div class="b" style="left:852.80px;top:382.40px;width:4.60px;height:6.20px;background:#3e3e40;"></div>
<svg style="left:853.4px;top:384.00px" width="4" height="4" viewBox="0 0 4 4"><path d="M0.2 0.2h3.2L1.8 3.2z" fill="#fff"/></svg>
<svg style="left:803.90px;top:393.20px" width="53.90" height="33.40" viewBox="0 0 53.90 33.40"><filter id="n14" x="0" y="0" width="100%" height="100%" color-interpolation-filters="sRGB"><feTurbulence type="fractalNoise" baseFrequency="0.65" numOctaves="2" seed="32"/><feColorMatrix values="0.15 0 0 0 0.082  0.2 0 0 0 0.116  0.13 0 0 0 0.072  0 0 0 0 1"/></filter><rect width="100%" height="100%" filter="url(#n14)"/></svg>
<div class="b" style="left:803.90px;top:390.00px;width:15.90px;height:6.20px;background:#1f1f21;"></div>
<svg style="left:804.80px;top:390.70px" width="4" height="5" viewBox="0 0 4 5"><rect x="0.3" y="2" width="3.2" height="2.7" fill="#f2f2f2"/><path d="M1 2.2V1.4a0.9 0.9 0 0 1 1.8 0V2.2" fill="none" stroke="#f2f2f2" stroke-width="0.6"/></svg>
<div class="t" style="left:810.50px;top:392px;font-size:4.5px;color:#e4e4e4;transform:scaleX(0.803);">Train</div>
<div class="t" style="left:822.40px;top:432px;font-size:4.5px;color:#cccccc;transform:scaleX(1.037);">Good_1</div>
<div class="b" style="left:802.60px;top:443.10px;width:49.60px;height:6.20px;background:#3e3e40;"></div>
<div class="b" style="left:803.90px;top:443.80px;width:5.00px;height:5.00px;background:#2a7fbe;"></div>
<div class="t" style="left:810.70px;top:445px;font-size:4.5px;color:#cccccc;transform:scaleX(0.881);">Good</div>
<div class="b" style="left:852.80px;top:443.10px;width:4.60px;height:6.20px;background:#3e3e40;"></div>
<svg style="left:853.4px;top:444.70px" width="4" height="4" viewBox="0 0 4 4"><path d="M0.2 0.2h3.2L1.8 3.2z" fill="#fff"/></svg>
<svg style="left:803.90px;top:453.90px" width="53.90" height="33.40" viewBox="0 0 53.90 33.40"><filter id="n15" x="0" y="0" width="100%" height="100%" color-interpolation-filters="sRGB"><feTurbulence type="fractalNoise" baseFrequency="0.65" numOctaves="2" seed="33"/><feColorMatrix values="0.15 0 0 0 0.082  0.2 0 0 0 0.116  0.13 0 0 0 0.072  0 0 0 0 1"/></filter><rect width="100%" height="100%" filter="url(#n15)"/></svg>
<div class="b" style="left:803.90px;top:450.70px;width:15.90px;height:6.20px;background:#1f1f21;"></div>
<svg style="left:804.80px;top:451.40px" width="4" height="5" viewBox="0 0 4 5"><rect x="0.3" y="2" width="3.2" height="2.7" fill="#f2f2f2"/><path d="M1 2.2V1.4a0.9 0.9 0 0 1 1.8 0V2.2" fill="none" stroke="#f2f2f2" stroke-width="0.6"/></svg>
<div class="t" style="left:810.50px;top:453px;font-size:4.5px;color:#e4e4e4;transform:scaleX(0.803);">Train</div>
<div class="t" style="left:822.40px;top:493px;font-size:4.5px;color:#cccccc;transform:scaleX(1.037);">Good_2</div>
<div class="b" style="left:802.60px;top:503.80px;width:49.60px;height:6.20px;background:#3e3e40;"></div>
<div class="b" style="left:803.90px;top:504.50px;width:5.00px;height:5.00px;background:#2a7fbe;"></div>
<div class="t" style="left:810.70px;top:506px;font-size:4.5px;color:#cccccc;transform:scaleX(0.881);">Good</div>
<div class="b" style="left:852.80px;top:503.80px;width:4.60px;height:6.20px;background:#3e3e40;"></div>
<svg style="left:853.4px;top:505.40px" width="4" height="4" viewBox="0 0 4 4"><path d="M0.2 0.2h3.2L1.8 3.2z" fill="#fff"/></svg>
<svg style="left:803.90px;top:514.60px" width="53.90" height="23.30" viewBox="0 0 53.90 23.30"><filter id="n16" x="0" y="0" width="100%" height="100%" color-interpolation-filters="sRGB"><feTurbulence type="fractalNoise" baseFrequency="0.65" numOctaves="2" seed="34"/><feColorMatrix values="0.15 0 0 0 0.082  0.2 0 0 0 0.116  0.13 0 0 0 0.072  0 0 0 0 1"/></filter><rect width="100%" height="100%" filter="url(#n16)"/></svg>
<div class="b" style="left:803.90px;top:511.40px;width:15.90px;height:6.20px;background:#1f1f21;"></div>
<svg style="left:804.80px;top:512.10px" width="4" height="5" viewBox="0 0 4 5"><rect x="0.3" y="2" width="3.2" height="2.7" fill="#f2f2f2"/><path d="M1 2.2V1.4a0.9 0.9 0 0 1 1.8 0V2.2" fill="none" stroke="#f2f2f2" stroke-width="0.6"/></svg>
<div class="t" style="left:810.50px;top:513px;font-size:4.5px;color:#e4e4e4;transform:scaleX(0.803);">Train</div>
<div class="b" style="left:143.80px;top:238.75px;width:150.00px;height:45.70px;background:#fff;"></div>
<div class="b" style="left:143.00px;top:241.05px;width:1.40px;height:44.60px;background:#b9b9b9;"></div>
<div class="b" style="left:143.00px;top:284.25px;width:147.70px;height:1.40px;background:#b9b9b9;"></div>
<div class="t" style="left:159.60px;top:250px;font-size:20.4px;letter-spacing:-0.264px;color:#1c8dcb;-webkit-text-stroke:0.4px #fff;">EasyClassify</div>
<div class="b" style="left:637.80px;top:238.75px;width:150.00px;height:45.70px;background:#fff;"></div>
<div class="b" style="left:637.00px;top:241.05px;width:1.40px;height:44.60px;background:#b9b9b9;"></div>
<div class="b" style="left:637.00px;top:284.25px;width:147.70px;height:1.40px;background:#b9b9b9;"></div>
<div class="t" style="left:661.20px;top:250px;font-size:20.4px;letter-spacing:-0.300px;color:#1c8dcb;-webkit-text-stroke:0.4px #fff;">EasyLocate</div>
<div class="b" style="left:143.80px;top:506.00px;width:150.00px;height:45.50px;background:#fff;"></div>
<div class="b" style="left:143.00px;top:508.30px;width:1.40px;height:44.40px;background:#b9b9b9;"></div>
<div class="b" style="left:143.00px;top:551.30px;width:147.70px;height:1.40px;background:#b9b9b9;"></div>
<div class="t" style="left:153.80px;top:512px;font-size:19.4px;letter-spacing:0.438px;color:#1c8dcb;-webkit-text-stroke:0.4px #fff;">EasySegment</div>
<div class="t" style="left:192.20px;top:532px;font-size:15.6px;letter-spacing:0.370px;color:#2f9bd1;font-weight:bold;">Supervised</div>
<div class="b" style="left:637.80px;top:506.00px;width:150.00px;height:45.50px;background:#fff;"></div>
<div class="b" style="left:637.00px;top:508.30px;width:1.40px;height:44.40px;background:#b9b9b9;"></div>
<div class="b" style="left:637.00px;top:551.30px;width:147.70px;height:1.40px;background:#b9b9b9;"></div>
<div class="t" style="left:652.40px;top:512px;font-size:19.4px;letter-spacing:0.456px;color:#1c8dcb;-webkit-text-stroke:0.4px #fff;">EasySegment</div>
<div class="t" style="left:670.80px;top:532px;font-size:15.6px;letter-spacing:0.369px;color:#2f9bd1;font-weight:bold;">Unsupervised</div>
</div></body></html>
